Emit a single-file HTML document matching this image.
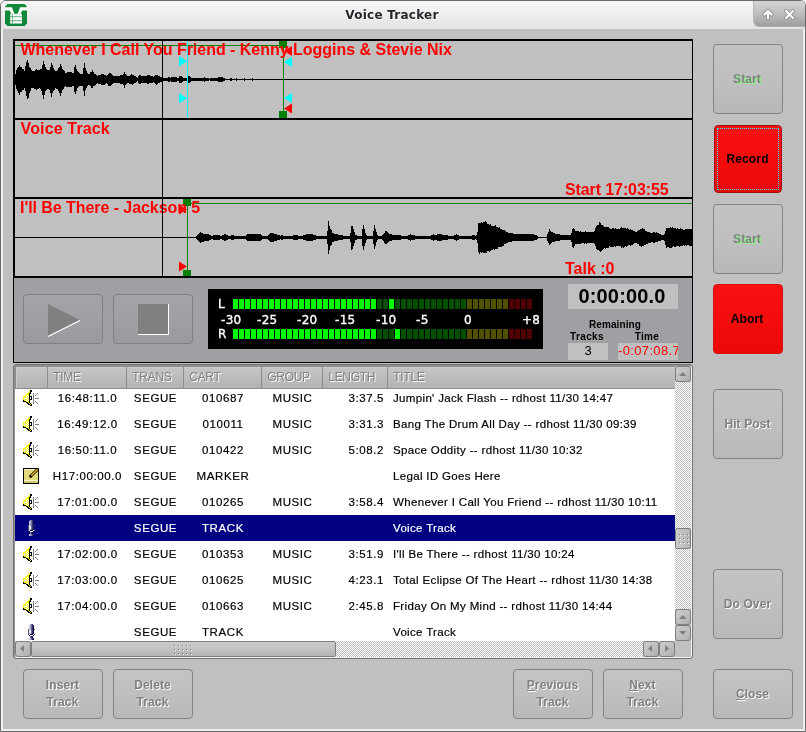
<!DOCTYPE html>
<html><head><meta charset="utf-8"><title>Voice Tracker</title>
<style>
html,body{margin:0;padding:0;}
body{width:806px;height:732px;overflow:hidden;background:#f4f4f4;position:relative;font-family:"Liberation Sans",sans-serif;font-size:12px;color:#000;}
.abs{position:absolute;}
#win{position:absolute;left:0;top:0;width:804px;height:730px;border:1px solid #6a6a6a;border-radius:6px 6px 0 0;background:#f0f0f0;overflow:hidden;}
#tb{position:absolute;left:0;top:0;width:804px;height:28px;background:linear-gradient(#f7f7f7,#efefef 40%,#e3e3e3);}
#tbtitle{position:absolute;left:-1px;top:7px;width:784px;text-align:center;font-family:"DejaVu Sans",sans-serif;font-weight:bold;font-size:12px;line-height:15px;color:#23282c;text-shadow:0 1px 0 #fff;letter-spacing:0.25px;}
#tbbtn{position:absolute;left:752px;top:0;width:52px;height:26px;border-radius:0 0 0 6px;background:linear-gradient(#d4d4d4,#c2c2c2 45%,#9e9e9e);border-left:1px solid #b8b8b8;border-bottom:1px solid #b0b0b0;box-sizing:border-box;}
#content{position:absolute;left:2px;top:28px;width:800px;height:700px;background:#c0c0c0;}
/* everything below is positioned in page coords via #page */
#page{position:absolute;left:0;top:0;width:806px;height:732px;}
#win,#page{will-change:transform;}
.wt{position:absolute;color:#ff0000;font-weight:bold;font-size:16px;line-height:18px;white-space:nowrap;}
.btn{position:absolute;box-sizing:border-box;border:1px solid #838383;border-radius:4px;letter-spacing:.1px;padding-right:1px;background:linear-gradient(#c3c3c3,#bfbfbf 50%,#b8b8b8);display:flex;align-items:center;justify-content:center;text-align:center;font-weight:bold;font-size:12px;line-height:17px;color:#808080;text-shadow:1px 1px 0 #fff;}
.btn.g{text-shadow:1px 1px 0 #80ff80;}
.btn.red{background:linear-gradient(#fb1010,#f40c0c 50%,#ea0808);border-color:#9c1212;color:#000;text-shadow:none;letter-spacing:.15px;}
.pbtn{position:absolute;box-sizing:border-box;border:1px solid #808084;border-radius:4px;background:linear-gradient(#a4a4a8,#a0a0a4 50%,#9a9a9e);}
.u{text-decoration:underline;}
.lbl{position:absolute;font-weight:bold;font-size:10px;line-height:12px;white-space:nowrap;text-align:center;}
.box{position:absolute;background:#c0c0c0;text-align:center;white-space:nowrap;overflow:hidden;}
/* list */
#list{position:absolute;left:13px;top:364px;width:680px;height:295px;box-sizing:border-box;border:1px solid #727272;border-radius:3px;background:#c0c0c0;overflow:hidden;box-shadow:inset 1px 1px 0 #929292,inset -1px -1px 0 #f2f2f2;}
#inner{position:absolute;left:1px;top:1px;width:676px;height:291px;overflow:hidden;}
#hdr{position:absolute;left:0;top:0;width:660px;height:23px;background:linear-gradient(#c6c6c6,#bdbdbd 50%,#b3b3b3);border-bottom:1px solid #8e8e8e;box-sizing:border-box;box-shadow:inset 1px 1px 0 #8c8c8c,inset 2px 2px 0 #cacaca;}
.h{position:absolute;top:0;height:22px;line-height:23px;color:#808080;text-shadow:1px 1px 0 #fff;font-size:12px;letter-spacing:-.3px;box-sizing:border-box;border-right:1px solid #8c8c8c;padding-left:5.300px;white-space:nowrap;}
#view{position:absolute;left:0;top:23px;width:660px;height:252px;background:#fff;overflow:hidden;}
.row{position:absolute;left:0;width:660px;height:26px;line-height:26px;white-space:nowrap;}
.row.sel{background:#000080;color:#fff;}
.c{position:absolute;top:0;height:26px;font-size:11.5px;letter-spacing:0.34px;-webkit-text-stroke:.18px currentColor;}
.c1{left:33px;width:79px;text-align:center;letter-spacing:.6px}
.c2{left:112px;width:57px;text-align:center;letter-spacing:.6px}
.c3{left:169px;width:78px;text-align:center;letter-spacing:.6px}
.c4{left:247px;width:61px;text-align:center;letter-spacing:.6px}
.c5{left:307px;width:62px;text-align:right;letter-spacing:.6px}
.c6{left:378px;}
.ic{position:absolute;left:8px;top:5px;}
.chk{background-color:#fff;background-image:conic-gradient(#c0c0c0 25%,#fff 0 50%,#c0c0c0 0 75%,#fff 0);background-size:2px 2px;}
.sb{position:absolute;box-sizing:border-box;border:1px solid #7e7e7e;border-radius:3px;background:linear-gradient(135deg,#cccccc,#c0c0c0 50%,#afafaf);}
</style></head>
<body>
<div id="win">
 <div id="tb"></div>
 <div id="tbtitle">Voice Tracker</div>
 <div id="tbbtn"></div>
 <div id="content"></div>
</div>
<div id="page">
<!-- window icon -->
<svg class="abs" style="left:5px;top:4px" width="22" height="22" viewBox="0 0 22 22">
 <path d="M2.5 0h17l2.5 2.5v17l-2.5 2.5h-17l-2.5-2.5v-17z" fill="#10893a"/>
 <path d="M0 3.200H6.900L8.200 6.600L8.800 8.400L10 9.800L11 10.100L12 9.800L13.200 8.400L13.800 6.600L15.100 3.200H22V6.600H17.200L15.800 10.100H17V19.400H5.200V10.100H6.200L4.800 6.600H0Z" fill="#fff"/>
 <rect x="7.100" y="10.100" width=".9" height="9.300" fill="#10893a" opacity=".6"/>
 <rect x="5.200" y="9.700" width="11.800" height=".8" fill="#10893a" opacity=".3"/>
 <rect x="5.200" y="12.300" width="11.800" height=".9" fill="#10893a" opacity=".72"/>
 <rect x="5.200" y="16.300" width="11.800" height=".9" fill="#10893a" opacity=".72"/>
</svg>
<!-- titlebar button glyphs -->
<svg class="abs" style="left:753px;top:0" width="52" height="27" viewBox="0 0 52 27">
 <g fill="none" stroke="#8a8a8a" stroke-width="4" stroke-linecap="round" stroke-linejoin="round" opacity=".8">
  <path d="M15 18v-7M11.5 14.5l3.500-3.500l3.500 3.500"/>
  <path d="M33 11l7 7M40 11l-7 7"/>
 </g>
 <g fill="none" stroke="#fff" stroke-width="2.200" stroke-linecap="round" stroke-linejoin="round">
  <path d="M15 18v-7M11.5 14.5l3.500-3.500l3.500 3.500"/>
  <path d="M33 11l7 7M40 11l-7 7"/>
 </g>
</svg>

<!-- wave / transport frame -->
<svg class="abs" style="left:0;top:0" width="806" height="370" viewBox="0 0 806 370" shape-rendering="crispEdges">
 <rect x="13" y="278" width="680" height="85" fill="#a0a0a4"/>
 <!-- frame -->
 <rect x="13" y="39" width="680" height="2" fill="#000"/>
 <rect x="13" y="118" width="680" height="2" fill="#000"/>
 <rect x="13" y="197" width="680" height="2" fill="#000"/>
 <rect x="13" y="276" width="680" height="2" fill="#000"/>
 <rect x="13" y="362" width="680" height="1" fill="#000"/>
 <rect x="13" y="39" width="2" height="239" fill="#000"/>
 <rect x="13" y="278" width="1" height="85" fill="#000"/>
 <rect x="692" y="39" width="1" height="324" fill="#000"/>
 <!-- centre lines -->
 <rect x="15" y="79" width="677" height="1" fill="#000"/>
 <rect x="15" y="237" width="677" height="1" fill="#000"/>
 <!-- now line -->
 <!-- waves -->
 <path d="M15 74v11h1v-11zM16 70v19h1v-19zM17 68v23h1v-23zM18 67v26h1v-26zM19 65v30h1v-30zM20 67v25h1v-25zM21 67v25h1v-25zM22 69v21h1v-21zM23 69v21h1v-21zM24 71v17h1v-17zM25 66v25h1v-25zM26 62v34h1v-34zM27 60v39h1v-39zM28 63v35h1v-35zM29 67v26h1v-26zM30 68v23h1v-23zM31 70v18h1v-18zM32 71v17h1v-17zM33 71v17h1v-17zM34 71v18h1v-18zM35 70v19h1v-19zM36 69v21h1v-21zM37 70v19h1v-19zM38 70v19h1v-19zM39 70v18h1v-18zM40 69v20h1v-20zM41 69v22h1v-22zM42 65v30h1v-30zM43 61v38h1v-38zM44 64v31h1v-31zM45 67v24h1v-24zM46 69v21h1v-21zM47 70v19h1v-19zM48 70v19h1v-19zM49 70v20h1v-20zM50 67v26h1v-26zM51 63v34h1v-34zM52 65v28h1v-28zM53 68v23h1v-23zM54 70v20h1v-20zM55 71v17h1v-17zM56 71v18h1v-18zM57 70v19h1v-19zM58 68v23h1v-23zM59 67v26h1v-26zM60 64v32h1v-32zM61 66v27h1v-27zM62 69v21h1v-21zM63 70v19h1v-19zM64 71v16h1v-16zM65 73v13h1v-13zM66 73v14h1v-14zM67 72v15h1v-15zM68 72v15h1v-15zM69 72v15h1v-15zM70 72v15h1v-15zM71 72v15h1v-15zM72 73v13h1v-13zM73 73v13h1v-13zM74 67v25h1v-25zM75 65v29h1v-29zM76 69v22h1v-22zM77 71v17h1v-17zM78 72v15h1v-15zM79 73v13h1v-13zM80 74v12h1v-12zM81 74v12h1v-12zM82 74v12h1v-12zM83 68v23h1v-23zM84 63v33h1v-33zM85 68v22h1v-22zM86 71v17h1v-17zM87 73v13h1v-13zM88 74v11h1v-11zM89 74v11h1v-11zM90 72v14h1v-14zM91 72v16h1v-16zM92 70v18h1v-18zM93 72v14h1v-14zM94 74v12h1v-12zM95 74v11h1v-11zM96 75v9h1v-9zM97 76v7h1v-7zM98 75v9h1v-9zM99 75v9h1v-9zM100 75v9h1v-9zM101 74v11h1v-11zM102 74v11h1v-11zM103 74v11h1v-11zM104 75v10h1v-10zM105 75v9h1v-9zM106 76v7h1v-7zM107 75v9h1v-9zM108 74v12h1v-12zM109 73v13h1v-13zM110 73v13h1v-13zM111 74v11h1v-11zM112 75v9h1v-9zM113 76v7h1v-7zM114 76v7h1v-7zM115 76v7h1v-7zM116 76v7h1v-7zM117 76v7h1v-7zM118 76v7h1v-7zM119 76v7h1v-7zM120 75v9h1v-9zM121 75v9h1v-9zM122 75v9h1v-9zM123 74v11h1v-11zM124 72v16h1v-16zM125 74v11h1v-11zM126 75v9h1v-9zM127 76v7h1v-7zM128 76v7h1v-7zM129 76v8h1v-8zM130 75v9h1v-9zM131 74v10h1v-10zM132 75v10h1v-10zM133 75v9h1v-9zM134 76v7h1v-7zM135 76v7h1v-7zM136 77v5h1v-5zM137 78v3h1v-3zM138 76v7h1v-7zM139 75v9h1v-9zM140 75v9h1v-9zM141 76v7h1v-7zM142 76v7h1v-7zM143 76v7h1v-7zM144 76v7h1v-7zM145 76v7h1v-7zM146 76v7h1v-7zM147 75v9h1v-9zM148 75v9h1v-9zM149 75v8h1v-8zM150 76v7h1v-7zM151 76v7h1v-7zM152 76v7h1v-7zM153 77v5h1v-5zM154 76v7h1v-7zM155 75v9h1v-9zM156 75v10h1v-10zM157 75v9h1v-9zM158 76v7h1v-7zM159 76v7h1v-7zM160 77v5h1v-5zM161 77v5h1v-5zM162 77v5h1v-5zM163 78v3h1v-3zM164 78v3h1v-3zM165 78v3h1v-3zM166 78v3h1v-3zM167 78v3h1v-3zM168 77v5h1v-5zM169 77v5h1v-5zM170 78v3h1v-3zM171 77v5h1v-5zM172 77v5h1v-5zM173 77v5h1v-5zM174 77v5h1v-5zM175 77v5h1v-5zM176 77v5h1v-5zM177 78v3h1v-3zM178 78v3h1v-3zM179 76v7h1v-7zM180 76v7h1v-7zM181 76v7h1v-7zM182 77v5h1v-5zM183 78v3h1v-3zM184 78v3h1v-3zM185 78v3h1v-3zM186 78v3h1v-3zM187 78v3h1v-3zM188 76v7h1v-7zM189 76v7h1v-7zM190 77v5h1v-5zM191 78v3h1v-3zM192 78v3h1v-3zM193 78v3h1v-3zM194 78v3h1v-3zM195 78v3h1v-3zM196 78v3h1v-3zM197 78v3h1v-3zM198 78v3h1v-3zM199 78v3h1v-3zM200 78v3h1v-3zM201 78v3h1v-3zM202 78v3h1v-3zM203 78v3h1v-3zM204 77v5h1v-5zM205 78v3h1v-3zM206 78v3h1v-3zM207 78v3h1v-3zM208 78v3h1v-3zM210 78v3h1v-3zM211 78v3h1v-3zM212 78v3h1v-3zM213 78v3h1v-3zM214 78v3h1v-3zM215 78v3h1v-3zM216 78v3h1v-3zM217 78v3h1v-3zM218 77v5h1v-5zM219 77v5h1v-5zM220 77v5h1v-5zM221 77v5h1v-5zM222 77v5h1v-5zM223 78v3h1v-3zM224 78v3h1v-3zM230 78v3h1v-3zM231 78v3h1v-3zM236 78v3h1v-3zM244 78v3h1v-3zM252 78v3h1v-3z" fill="#000"/>
 <path d="M196 236v3h1v-3zM197 235v5h1v-5zM198 234v7h1v-7zM199 233v9h1v-9zM200 232v11h1v-11zM201 233v9h1v-9zM202 233v9h1v-9zM203 234v8h1v-8zM204 234v7h1v-7zM205 234v7h1v-7zM206 234v7h1v-7zM207 234v7h1v-7zM208 234v7h1v-7zM209 235v5h1v-5zM210 235v5h1v-5zM211 236v3h1v-3zM212 236v3h1v-3zM213 235v5h1v-5zM214 235v5h1v-5zM215 235v5h1v-5zM216 235v5h1v-5zM217 235v5h1v-5zM218 235v5h1v-5zM219 235v5h1v-5zM220 236v3h1v-3zM221 236v3h1v-3zM222 235v5h1v-5zM223 235v5h1v-5zM224 234v7h1v-7zM225 234v7h1v-7zM226 235v5h1v-5zM227 235v5h1v-5zM228 236v3h1v-3zM229 236v3h1v-3zM230 236v3h1v-3zM231 235v5h1v-5zM232 235v5h1v-5zM233 235v5h1v-5zM234 236v3h1v-3zM235 236v3h1v-3zM236 236v3h1v-3zM237 236v3h1v-3zM238 236v3h1v-3zM239 236v3h1v-3zM240 236v3h1v-3zM241 236v3h1v-3zM242 236v3h1v-3zM243 236v3h1v-3zM244 236v3h1v-3zM245 236v3h1v-3zM246 235v5h1v-5zM247 234v7h1v-7zM248 234v7h1v-7zM249 234v7h1v-7zM250 234v7h1v-7zM251 234v7h1v-7zM252 234v7h1v-7zM253 234v7h1v-7zM254 234v7h1v-7zM255 234v7h1v-7zM256 234v7h1v-7zM257 234v7h1v-7zM258 234v7h1v-7zM259 234v7h1v-7zM260 234v7h1v-7zM261 235v5h1v-5zM262 236v3h1v-3zM263 236v3h1v-3zM264 236v3h1v-3zM265 236v3h1v-3zM266 236v3h1v-3zM267 236v3h1v-3zM268 235v5h1v-5zM269 234v7h1v-7zM270 233v9h1v-9zM271 233v9h1v-9zM272 233v9h1v-9zM273 233v9h1v-9zM274 234v7h1v-7zM275 234v7h1v-7zM276 234v7h1v-7zM277 235v5h1v-5zM278 235v5h1v-5zM279 235v5h1v-5zM280 236v3h1v-3zM281 235v5h1v-5zM282 235v5h1v-5zM283 236v3h1v-3zM284 236v3h1v-3zM285 236v3h1v-3zM286 236v3h1v-3zM287 236v3h1v-3zM288 236v3h1v-3zM289 236v3h1v-3zM290 236v3h1v-3zM291 236v3h1v-3zM292 236v3h1v-3zM293 235v5h1v-5zM294 235v5h1v-5zM295 235v5h1v-5zM296 235v5h1v-5zM297 235v5h1v-5zM298 236v3h1v-3zM299 236v3h1v-3zM300 236v3h1v-3zM301 236v3h1v-3zM302 236v3h1v-3zM303 235v5h1v-5zM304 235v5h1v-5zM305 235v5h1v-5zM306 234v7h1v-7zM307 234v7h1v-7zM308 234v7h1v-7zM309 234v7h1v-7zM310 234v7h1v-7zM311 234v7h1v-7zM312 234v7h1v-7zM313 235v5h1v-5zM314 235v5h1v-5zM315 235v5h1v-5zM316 236v3h1v-3zM317 236v3h1v-3zM318 236v3h1v-3zM319 236v3h1v-3zM320 236v3h1v-3zM321 236v3h1v-3zM322 236v3h1v-3zM323 236v3h1v-3zM324 236v3h1v-3zM325 236v3h1v-3zM326 236v3h1v-3zM327 231v13h1v-13zM328 221v33h1v-33zM329 226v24h1v-24zM330 229v17h1v-17zM331 230v15h1v-15zM332 233v9h1v-9zM333 233v9h1v-9zM334 234v7h1v-7zM335 234v7h1v-7zM336 234v7h1v-7zM337 234v7h1v-7zM338 235v5h1v-5zM339 235v5h1v-5zM340 235v5h1v-5zM341 235v5h1v-5zM342 235v5h1v-5zM343 236v3h1v-3zM344 236v3h1v-3zM345 236v3h1v-3zM346 236v3h1v-3zM347 236v3h1v-3zM348 236v3h1v-3zM349 236v3h1v-3zM350 233v9h1v-9zM351 226v24h1v-24zM352 226v23h1v-23zM353 229v17h1v-17zM354 232v11h1v-11zM355 235v5h1v-5zM356 235v5h1v-5zM357 236v3h1v-3zM358 236v3h1v-3zM359 236v3h1v-3zM360 236v3h1v-3zM361 236v3h1v-3zM362 229v17h1v-17zM363 225v25h1v-25zM364 229v17h1v-17zM365 233v10h1v-10zM366 235v5h1v-5zM367 236v3h1v-3zM368 236v3h1v-3zM369 236v3h1v-3zM370 236v3h1v-3zM371 236v3h1v-3zM372 236v3h1v-3zM373 231v13h1v-13zM374 225v24h1v-24zM375 229v17h1v-17zM376 232v10h1v-10zM377 235v5h1v-5zM378 236v3h1v-3zM379 236v3h1v-3zM380 236v3h1v-3zM381 236v3h1v-3zM382 235v5h1v-5zM383 234v7h1v-7zM384 233v10h1v-10zM385 231v13h1v-13zM386 231v13h1v-13zM387 232v11h1v-11zM388 233v9h1v-9zM389 234v7h1v-7zM390 234v7h1v-7zM391 234v7h1v-7zM392 235v5h1v-5zM393 235v5h1v-5zM394 235v5h1v-5zM395 235v5h1v-5zM396 235v5h1v-5zM397 235v5h1v-5zM398 235v5h1v-5zM399 235v5h1v-5zM400 235v5h1v-5zM401 236v3h1v-3zM402 236v3h1v-3zM403 236v3h1v-3zM404 236v3h1v-3zM405 236v3h1v-3zM406 236v3h1v-3zM407 236v3h1v-3zM408 235v5h1v-5zM409 235v5h1v-5zM410 234v7h1v-7zM411 235v5h1v-5zM412 235v5h1v-5zM413 235v5h1v-5zM414 235v5h1v-5zM415 236v3h1v-3zM416 236v3h1v-3zM417 236v3h1v-3zM418 236v3h1v-3zM419 236v3h1v-3zM420 236v3h1v-3zM421 236v3h1v-3zM422 236v3h1v-3zM423 236v3h1v-3zM424 236v3h1v-3zM425 236v3h1v-3zM426 236v3h1v-3zM427 236v3h1v-3zM428 236v3h1v-3zM429 236v3h1v-3zM430 236v3h1v-3zM431 235v5h1v-5zM432 235v5h1v-5zM433 234v7h1v-7zM434 235v5h1v-5zM435 235v5h1v-5zM436 235v5h1v-5zM437 234v7h1v-7zM438 234v7h1v-7zM439 234v7h1v-7zM440 234v7h1v-7zM441 234v7h1v-7zM442 235v5h1v-5zM443 235v5h1v-5zM444 235v5h1v-5zM445 235v5h1v-5zM446 235v5h1v-5zM447 235v5h1v-5zM448 236v3h1v-3zM449 236v3h1v-3zM450 236v3h1v-3zM451 236v3h1v-3zM452 236v3h1v-3zM453 236v3h1v-3zM454 235v5h1v-5zM455 235v5h1v-5zM456 234v7h1v-7zM457 235v5h1v-5zM458 235v5h1v-5zM459 236v3h1v-3zM460 236v3h1v-3zM461 236v3h1v-3zM462 236v3h1v-3zM463 236v3h1v-3zM464 236v3h1v-3zM465 236v3h1v-3zM466 236v3h1v-3zM467 236v3h1v-3zM468 236v3h1v-3zM469 236v3h1v-3zM470 236v3h1v-3zM471 236v3h1v-3zM472 235v5h1v-5zM473 235v5h1v-5zM474 235v5h1v-5zM475 236v3h1v-3zM476 235v5h1v-5zM477 232v11h1v-11zM478 223v29h1v-29zM479 223v31h1v-31zM480 223v29h1v-29zM481 222v31h1v-31zM482 223v29h1v-29zM483 222v31h1v-31zM484 222v31h1v-31zM485 221v32h1v-32zM486 222v31h1v-31zM487 224v27h1v-27zM488 224v27h1v-27zM489 225v27h1v-27zM490 224v27h1v-27zM491 226v24h1v-24zM492 226v24h1v-24zM493 226v23h1v-23zM494 226v24h1v-24zM495 225v24h1v-24zM496 227v22h1v-22zM497 227v22h1v-22zM498 228v19h1v-19zM499 227v20h1v-20zM500 229v18h1v-18zM501 229v18h1v-18zM502 230v16h1v-16zM503 230v16h1v-16zM504 230v14h1v-14zM505 231v13h1v-13zM506 232v11h1v-11zM507 232v11h1v-11zM508 233v9h1v-9zM509 233v9h1v-9zM510 233v9h1v-9zM511 233v9h1v-9zM512 233v8h1v-8zM513 234v7h1v-7zM514 234v7h1v-7zM515 234v7h1v-7zM516 234v7h1v-7zM517 234v7h1v-7zM518 234v7h1v-7zM519 234v7h1v-7zM520 234v7h1v-7zM521 234v7h1v-7zM522 234v7h1v-7zM523 234v7h1v-7zM524 234v7h1v-7zM525 234v7h1v-7zM526 234v7h1v-7zM527 234v7h1v-7zM528 234v7h1v-7zM529 234v7h1v-7zM530 234v7h1v-7zM531 234v7h1v-7zM532 234v7h1v-7zM533 234v7h1v-7zM534 235v5h1v-5zM535 235v5h1v-5zM536 235v5h1v-5zM537 236v3h1v-3zM547 234v7h1v-7zM548 232v11h1v-11zM549 229v16h1v-16zM550 231v13h1v-13zM551 232v11h1v-11zM552 232v10h1v-10zM553 233v9h1v-9zM554 233v9h1v-9zM555 234v7h1v-7zM556 234v7h1v-7zM557 234v7h1v-7zM558 234v7h1v-7zM559 234v7h1v-7zM560 235v5h1v-5zM561 235v5h1v-5zM562 235v5h1v-5zM563 235v5h1v-5zM564 235v5h1v-5zM565 235v5h1v-5zM566 235v5h1v-5zM567 235v5h1v-5zM568 235v5h1v-5zM569 235v5h1v-5zM570 235v5h1v-5zM571 233v9h1v-9zM572 229v18h1v-18zM573 228v20h1v-20zM574 229v17h1v-17zM575 231v13h1v-13zM576 231v13h1v-13zM577 231v13h1v-13zM578 231v13h1v-13zM579 232v12h1v-12zM580 231v13h1v-13zM581 232v11h1v-11zM582 232v11h1v-11zM583 232v11h1v-11zM584 232v12h1v-12zM585 231v12h1v-12zM586 232v12h1v-12zM587 232v11h1v-11zM588 232v11h1v-11zM589 232v11h1v-11zM590 232v11h1v-11zM591 232v11h1v-11zM592 232v11h1v-11zM593 232v11h1v-11zM594 231v13h1v-13zM595 228v18h1v-18zM596 226v23h1v-23zM597 225v25h1v-25zM598 225v25h1v-25zM599 222v29h1v-29zM600 223v29h1v-29zM601 225v26h1v-26zM602 225v25h1v-25zM603 226v23h1v-23zM604 227v21h1v-21zM605 227v22h1v-22zM606 227v21h1v-21zM607 227v21h1v-21zM608 227v21h1v-21zM609 228v18h1v-18zM610 229v18h1v-18zM611 229v18h1v-18zM612 228v19h1v-19zM613 228v19h1v-19zM614 229v17h1v-17zM615 228v19h1v-19zM616 229v17h1v-17zM617 229v17h1v-17zM618 229v17h1v-17zM619 229v17h1v-17zM620 228v18h1v-18zM621 227v21h1v-21zM622 228v19h1v-19zM623 228v20h1v-20zM624 228v19h1v-19zM625 228v18h1v-18zM626 229v18h1v-18zM627 228v18h1v-18zM628 229v16h1v-16zM629 230v15h1v-15zM630 229v17h1v-17zM631 230v15h1v-15zM632 230v15h1v-15zM633 231v13h1v-13zM634 231v12h1v-12zM635 232v11h1v-11zM636 232v11h1v-11zM637 231v13h1v-13zM638 230v14h1v-14zM639 230v16h1v-16zM640 229v17h1v-17zM641 229v18h1v-18zM642 228v18h1v-18zM643 229v17h1v-17zM644 229v16h1v-16zM645 231v14h1v-14zM646 231v13h1v-13zM647 232v12h1v-12zM648 232v11h1v-11zM649 232v11h1v-11zM650 233v10h1v-10zM651 233v9h1v-9zM652 233v9h1v-9zM653 232v11h1v-11zM654 232v11h1v-11zM655 233v9h1v-9zM656 232v10h1v-10zM657 233v9h1v-9zM658 233v8h1v-8zM659 234v7h1v-7zM660 234v7h1v-7zM661 235v5h1v-5zM662 235v5h1v-5zM663 235v5h1v-5zM664 234v7h1v-7zM665 231v14h1v-14zM666 228v20h1v-20zM667 228v19h1v-19zM668 228v19h1v-19zM669 228v20h1v-20zM670 227v21h1v-21zM671 228v20h1v-20zM672 227v20h1v-20zM673 228v18h1v-18zM674 228v19h1v-19zM675 228v19h1v-19zM676 229v17h1v-17zM677 228v18h1v-18zM678 229v17h1v-17zM679 229v18h1v-18zM680 228v18h1v-18zM681 229v17h1v-17zM682 229v17h1v-17zM683 230v15h1v-15zM684 230v16h1v-16zM685 229v16h1v-16zM686 229v17h1v-17zM687 229v16h1v-16zM688 229v16h1v-16zM689 229v17h1v-17zM690 229v17h1v-17zM691 229v17h1v-17z" fill="#000"/>
 <!-- wave1 markers -->
 <rect x="15" y="45" width="268" height="1" fill="#008000"/>
 <rect x="283" y="45" width="1" height="68" fill="#008000"/>
 <rect x="279" y="41" width="8" height="7" fill="#008000"/>
 <rect x="279" y="111" width="8" height="7" fill="#008000"/>
 <rect x="187" y="41" width="1" height="77" fill="#00ffff"/>
 <g shape-rendering="auto">
 <path d="M179 56v10.500l8-5.250z" fill="#00ffff"/>
 <path d="M179 93v10.500l8-5.250z" fill="#00ffff"/>
 <path d="M292 57v10l-8-5z" fill="#00ffff"/>
 <path d="M292 93v10l-8-5z" fill="#00ffff"/>
 <path d="M292 46v10l-8-5z" fill="#ff0000"/>
 <path d="M292 103.500v10l-8-5z" fill="#ff0000"/>
 <!-- wave3 markers -->
 <path d="M179 204.500v10l8-5z" fill="#ff0000"/>
 <path d="M179 261.500v10l8-5z" fill="#ff0000"/>
 </g>
 <rect x="187" y="203" width="505" height="1" fill="#008000"/>
 <rect x="187" y="203" width="1" height="68" fill="#008000"/>
 <rect x="183" y="199" width="8" height="7" fill="#008000"/>
 <rect x="183" y="270" width="8" height="6" fill="#008000"/>
 <!-- meter -->
 <rect x="208" y="289" width="335" height="60" fill="#000"/>
 <rect x="233" y="299" width="5" height="10" fill="#00ff00"/><rect x="239" y="299" width="5" height="10" fill="#00ff00"/><rect x="245" y="299" width="5" height="10" fill="#00ff00"/><rect x="251" y="299" width="5" height="10" fill="#00ff00"/><rect x="257" y="299" width="5" height="10" fill="#00ff00"/><rect x="263" y="299" width="5" height="10" fill="#00ff00"/><rect x="269" y="299" width="5" height="10" fill="#00ff00"/><rect x="275" y="299" width="5" height="10" fill="#00ff00"/><rect x="281" y="299" width="5" height="10" fill="#00ff00"/><rect x="287" y="299" width="5" height="10" fill="#00ff00"/><rect x="293" y="299" width="5" height="10" fill="#00ff00"/><rect x="299" y="299" width="5" height="10" fill="#00ff00"/><rect x="305" y="299" width="5" height="10" fill="#00ff00"/><rect x="311" y="299" width="5" height="10" fill="#00ff00"/><rect x="317" y="299" width="5" height="10" fill="#00ff00"/><rect x="323" y="299" width="5" height="10" fill="#00ff00"/><rect x="329" y="299" width="5" height="10" fill="#00ff00"/><rect x="335" y="299" width="5" height="10" fill="#00ff00"/><rect x="341" y="299" width="5" height="10" fill="#00ff00"/><rect x="347" y="299" width="5" height="10" fill="#00ff00"/><rect x="353" y="299" width="5" height="10" fill="#00ff00"/><rect x="359" y="299" width="5" height="10" fill="#00ff00"/><rect x="365" y="299" width="5" height="10" fill="#00ff00"/><rect x="371" y="299" width="5" height="10" fill="#00ff00"/><rect x="377" y="299" width="5" height="10" fill="#005000"/><rect x="383" y="299" width="5" height="10" fill="#005000"/><rect x="389" y="299" width="5" height="10" fill="#00ff00"/><rect x="395" y="299" width="5" height="10" fill="#005000"/><rect x="401" y="299" width="5" height="10" fill="#005000"/><rect x="407" y="299" width="5" height="10" fill="#005000"/><rect x="413" y="299" width="5" height="10" fill="#005000"/><rect x="419" y="299" width="5" height="10" fill="#005000"/><rect x="425" y="299" width="5" height="10" fill="#005000"/><rect x="431" y="299" width="5" height="10" fill="#005000"/><rect x="437" y="299" width="5" height="10" fill="#005000"/><rect x="443" y="299" width="5" height="10" fill="#005000"/><rect x="449" y="299" width="5" height="10" fill="#005000"/><rect x="455" y="299" width="5" height="10" fill="#005000"/><rect x="461" y="299" width="5" height="10" fill="#005000"/><rect x="467" y="299" width="5" height="10" fill="#505000"/><rect x="473" y="299" width="5" height="10" fill="#505000"/><rect x="479" y="299" width="5" height="10" fill="#505000"/><rect x="485" y="299" width="5" height="10" fill="#505000"/><rect x="491" y="299" width="5" height="10" fill="#505000"/><rect x="497" y="299" width="5" height="10" fill="#505000"/><rect x="503" y="299" width="5" height="10" fill="#505000"/><rect x="509" y="299" width="5" height="10" fill="#500000"/><rect x="515" y="299" width="5" height="10" fill="#500000"/><rect x="521" y="299" width="5" height="10" fill="#500000"/><rect x="527" y="299" width="5" height="10" fill="#500000"/><rect x="233" y="329" width="5" height="10" fill="#00ff00"/><rect x="239" y="329" width="5" height="10" fill="#00ff00"/><rect x="245" y="329" width="5" height="10" fill="#00ff00"/><rect x="251" y="329" width="5" height="10" fill="#00ff00"/><rect x="257" y="329" width="5" height="10" fill="#00ff00"/><rect x="263" y="329" width="5" height="10" fill="#00ff00"/><rect x="269" y="329" width="5" height="10" fill="#00ff00"/><rect x="275" y="329" width="5" height="10" fill="#00ff00"/><rect x="281" y="329" width="5" height="10" fill="#00ff00"/><rect x="287" y="329" width="5" height="10" fill="#00ff00"/><rect x="293" y="329" width="5" height="10" fill="#00ff00"/><rect x="299" y="329" width="5" height="10" fill="#00ff00"/><rect x="305" y="329" width="5" height="10" fill="#00ff00"/><rect x="311" y="329" width="5" height="10" fill="#00ff00"/><rect x="317" y="329" width="5" height="10" fill="#00ff00"/><rect x="323" y="329" width="5" height="10" fill="#00ff00"/><rect x="329" y="329" width="5" height="10" fill="#00ff00"/><rect x="335" y="329" width="5" height="10" fill="#00ff00"/><rect x="341" y="329" width="5" height="10" fill="#00ff00"/><rect x="347" y="329" width="5" height="10" fill="#00ff00"/><rect x="353" y="329" width="5" height="10" fill="#00ff00"/><rect x="359" y="329" width="5" height="10" fill="#00ff00"/><rect x="365" y="329" width="5" height="10" fill="#00ff00"/><rect x="371" y="329" width="5" height="10" fill="#00ff00"/><rect x="377" y="329" width="5" height="10" fill="#005000"/><rect x="383" y="329" width="5" height="10" fill="#005000"/><rect x="389" y="329" width="5" height="10" fill="#005000"/><rect x="395" y="329" width="5" height="10" fill="#00ff00"/><rect x="401" y="329" width="5" height="10" fill="#005000"/><rect x="407" y="329" width="5" height="10" fill="#005000"/><rect x="413" y="329" width="5" height="10" fill="#005000"/><rect x="419" y="329" width="5" height="10" fill="#005000"/><rect x="425" y="329" width="5" height="10" fill="#005000"/><rect x="431" y="329" width="5" height="10" fill="#005000"/><rect x="437" y="329" width="5" height="10" fill="#005000"/><rect x="443" y="329" width="5" height="10" fill="#005000"/><rect x="449" y="329" width="5" height="10" fill="#005000"/><rect x="455" y="329" width="5" height="10" fill="#005000"/><rect x="461" y="329" width="5" height="10" fill="#005000"/><rect x="467" y="329" width="5" height="10" fill="#505000"/><rect x="473" y="329" width="5" height="10" fill="#505000"/><rect x="479" y="329" width="5" height="10" fill="#505000"/><rect x="485" y="329" width="5" height="10" fill="#505000"/><rect x="491" y="329" width="5" height="10" fill="#505000"/><rect x="497" y="329" width="5" height="10" fill="#505000"/><rect x="503" y="329" width="5" height="10" fill="#505000"/><rect x="509" y="329" width="5" height="10" fill="#500000"/><rect x="515" y="329" width="5" height="10" fill="#500000"/><rect x="521" y="329" width="5" height="10" fill="#500000"/><rect x="527" y="329" width="5" height="10" fill="#500000"/>
</svg>
<div class="wt" style="left:20.500px;top:41px;letter-spacing:-.02px">Whenever I Call You Friend - Kenny Loggins &amp; Stevie Nix</div>
<div class="wt" style="left:20.500px;top:120px;letter-spacing:.15px">Voice Track</div>
<div class="wt" style="left:20px;top:199px;letter-spacing:-.06px">I'll Be There - Jackson 5</div>
<div class="wt" style="left:565px;top:181px;letter-spacing:-.1px">Start 17:03:55</div>
<div class="wt" style="left:565px;top:260px">Talk :0</div>

<div class="abs" style="left:162px;top:41px;width:1px;height:235px;background:#000"></div>
<!-- transport buttons -->
<div class="pbtn" style="left:23px;top:294px;width:80px;height:50px"></div>
<div class="pbtn" style="left:113px;top:294px;width:80px;height:50px"></div>
<svg class="abs" style="left:23px;top:294px" width="170" height="50" viewBox="23 294 170 50">
 <path d="M48 304v32l32-16z" fill="#808080"/>
 <path d="M48 336.500l32-16" stroke="#fff" stroke-width="1.300" fill="none"/>
 <rect x="138" y="304" width="30" height="30" fill="#808080" shape-rendering="crispEdges"/>
 <path d="M138 334.500h30.500v-30.500" stroke="#fff" stroke-width="1" fill="none" shape-rendering="crispEdges"/>
</svg>
<!-- meter labels -->
<div class="abs" style="left:0;top:0;font-family:'DejaVu Sans',sans-serif;font-size:12px;line-height:14px;color:#fff;white-space:nowrap;-webkit-text-stroke:.35px #fff;letter-spacing:.3px">
 <span class="abs" style="left:218px;top:297px">L</span>
 <span class="abs" style="left:218px;top:327px">R</span>
 <span class="abs" style="left:221px;top:313px">-30</span>
 <span class="abs" style="left:257px;top:313px">-25</span>
 <span class="abs" style="left:297px;top:313px">-20</span>
 <span class="abs" style="left:335px;top:313px">-15</span>
 <span class="abs" style="left:376px;top:313px">-10</span>
 <span class="abs" style="left:416px;top:313px">-5</span>
 <span class="abs" style="left:464px;top:313px">0</span>
 <span class="abs" style="left:522px;top:313px">+8</span>
</div>
<!-- timer -->
<div class="box" style="left:568px;top:284px;width:110px;height:25px;font-weight:bold;font-size:20px;line-height:25px;letter-spacing:.15px;text-indent:-2px">0:00:00.0</div>
<div class="lbl" style="left:585px;top:319px;width:60px;letter-spacing:.1px">Remaining</div>
<div class="lbl" style="left:566px;top:331px;width:42px;letter-spacing:.4px">Tracks</div>
<div class="lbl" style="left:626px;top:331px;width:42px;letter-spacing:.3px">Time</div>
<div class="box" style="left:568px;top:343px;width:40px;height:17px;font-size:13px;line-height:15px">3</div>
<div class="box" style="left:618px;top:343px;width:60px;height:17px;font-size:13px;line-height:15px;color:#ff0000;letter-spacing:.35px">-0:07:08.7</div>

<!-- right buttons -->
<div class="btn g" style="left:713px;top:44px;width:70px;height:70px;padding-right:2px">Start</div>
<div class="btn red" style="left:714px;top:125px;width:68px;height:68px">Record<div class="abs" style="left:2px;top:2px;width:60px;height:60px;border:1px dotted #30f0ff"></div></div>
<div class="btn g" style="left:713px;top:204px;width:70px;height:70px;padding-right:2px">Start</div>
<div class="btn red" style="left:713px;top:284px;width:70px;height:70px;border-color:#d81010;padding-right:2px">Abort</div>
<div class="btn" style="left:713px;top:389px;width:70px;height:70px">Hit Post</div>
<div class="btn" style="left:713px;top:569px;width:70px;height:70px">Do Over</div>
<div class="btn" style="left:713px;top:669px;width:80px;height:50px"><span><span class="u">C</span>lose</span></div>
<!-- bottom buttons -->
<div class="btn" style="left:23px;top:669px;width:80px;height:50px">Insert<br>Track</div>
<div class="btn" style="left:113px;top:669px;width:80px;height:50px">Delete<br>Track</div>
<div class="btn" style="left:513px;top:669px;width:80px;height:50px"><span><span class="u">P</span>revious<br>Track</span></div>
<div class="btn" style="left:603px;top:669px;width:80px;height:50px"><span><span class="u">N</span>ext<br>Track</span></div>

<!-- list -->
<div id="list"><div id="inner">
 <div id="hdr">
  <div class="h" style="left:0;width:33px"></div>
  <div class="h" style="left:33px;width:79px">TIME</div>
  <div class="h" style="left:112px;width:57px">TRANS</div>
  <div class="h" style="left:169px;width:78px">CART</div>
  <div class="h" style="left:247px;width:61px">GROUP</div>
  <div class="h" style="left:308px;width:65px">LENGTH</div>
  <div class="h" style="left:373px;width:287px;border-right:none">TITLE</div>
 </div>
 <div id="view">
<div class="row" style="top:-4px"><svg class="ic" width="16" height="16" viewBox="0 0 16 16" shape-rendering="crispEdges"><rect x="7" y="0" width="2" height="1" fill="#000"/><rect x="6" y="1" width="1" height="1" fill="#ffff00"/><rect x="7" y="1" width="2" height="1" fill="#000"/><rect x="5" y="2" width="2" height="1" fill="#ffff00"/><rect x="7" y="2" width="1" height="1" fill="#000"/><rect x="8" y="2" width="2" height="1" fill="#fff"/><rect x="4" y="3" width="2" height="1" fill="#ffff00"/><rect x="6" y="3" width="2" height="1" fill="#000"/><rect x="8" y="3" width="2" height="1" fill="#fff"/><rect x="10" y="3" width="1" height="1" fill="#808080"/><rect x="14" y="3" width="1" height="1" fill="#808080"/><rect x="3" y="4" width="3" height="1" fill="#ffff00"/><rect x="6" y="4" width="1" height="1" fill="#000"/><rect x="7" y="4" width="3" height="1" fill="#fff"/><rect x="10" y="4" width="1" height="1" fill="#808080"/><rect x="13" y="4" width="1" height="1" fill="#808080"/><rect x="2" y="5" width="2" height="1" fill="#ffff00"/><rect x="4" y="5" width="1" height="1" fill="#fff"/><rect x="5" y="5" width="1" height="1" fill="#ffff00"/><rect x="6" y="5" width="1" height="1" fill="#000"/><rect x="7" y="5" width="3" height="1" fill="#fff"/><rect x="10" y="5" width="1" height="1" fill="#808080"/><rect x="12" y="5" width="1" height="1" fill="#808080"/><rect x="0" y="6" width="3" height="1" fill="#ffff00"/><rect x="3" y="6" width="1" height="1" fill="#fff"/><rect x="4" y="6" width="1" height="1" fill="#ffff00"/><rect x="5" y="6" width="1" height="1" fill="#fff"/><rect x="6" y="6" width="3" height="1" fill="#000"/><rect x="9" y="6" width="1" height="1" fill="#fff"/><rect x="10" y="6" width="1" height="1" fill="#808080"/><rect x="0" y="7" width="1" height="1" fill="#ffff00"/><rect x="1" y="7" width="1" height="1" fill="#d8d8f0"/><rect x="2" y="7" width="2" height="1" fill="#ffff00"/><rect x="4" y="7" width="1" height="1" fill="#fff"/><rect x="5" y="7" width="1" height="1" fill="#ffff00"/><rect x="6" y="7" width="1" height="1" fill="#000"/><rect x="7" y="7" width="1" height="1" fill="#fff"/><rect x="8" y="7" width="1" height="1" fill="#000"/><rect x="9" y="7" width="1" height="1" fill="#fff"/><rect x="10" y="7" width="1" height="1" fill="#808080"/><rect x="0" y="8" width="1" height="1" fill="#ffff00"/><rect x="1" y="8" width="1" height="1" fill="#d8d8f0"/><rect x="2" y="8" width="2" height="1" fill="#fff"/><rect x="4" y="8" width="1" height="1" fill="#ffff00"/><rect x="5" y="8" width="1" height="1" fill="#fff"/><rect x="6" y="8" width="1" height="1" fill="#000"/><rect x="7" y="8" width="1" height="1" fill="#fff"/><rect x="8" y="8" width="1" height="1" fill="#000"/><rect x="9" y="8" width="1" height="1" fill="#fff"/><rect x="10" y="8" width="1" height="1" fill="#808080"/><rect x="12" y="8" width="4" height="1" fill="#808080"/><rect x="0" y="9" width="1" height="1" fill="#ffff00"/><rect x="1" y="9" width="1" height="1" fill="#d8d8f0"/><rect x="2" y="9" width="2" height="1" fill="#ffff00"/><rect x="4" y="9" width="1" height="1" fill="#fff"/><rect x="5" y="9" width="1" height="1" fill="#ffff00"/><rect x="6" y="9" width="3" height="1" fill="#000"/><rect x="9" y="9" width="1" height="1" fill="#fff"/><rect x="10" y="9" width="1" height="1" fill="#808080"/><rect x="0" y="10" width="1" height="1" fill="#000"/><rect x="1" y="10" width="2" height="1" fill="#ffff00"/><rect x="3" y="10" width="1" height="1" fill="#fff"/><rect x="4" y="10" width="1" height="1" fill="#ffff00"/><rect x="5" y="10" width="1" height="1" fill="#fff"/><rect x="6" y="10" width="1" height="1" fill="#000"/><rect x="7" y="10" width="3" height="1" fill="#fff"/><rect x="10" y="10" width="1" height="1" fill="#808080"/><rect x="0" y="11" width="3" height="1" fill="#000"/><rect x="3" y="11" width="1" height="1" fill="#ffff00"/><rect x="4" y="11" width="1" height="1" fill="#fff"/><rect x="5" y="11" width="1" height="1" fill="#ffff00"/><rect x="6" y="11" width="1" height="1" fill="#000"/><rect x="7" y="11" width="3" height="1" fill="#fff"/><rect x="10" y="11" width="1" height="1" fill="#808080"/><rect x="12" y="11" width="1" height="1" fill="#808080"/><rect x="3" y="12" width="2" height="1" fill="#000"/><rect x="5" y="12" width="1" height="1" fill="#ffff00"/><rect x="6" y="12" width="1" height="1" fill="#000"/><rect x="7" y="12" width="3" height="1" fill="#fff"/><rect x="10" y="12" width="1" height="1" fill="#808080"/><rect x="13" y="12" width="1" height="1" fill="#808080"/><rect x="4" y="13" width="2" height="1" fill="#000"/><rect x="6" y="13" width="1" height="1" fill="#ffff00"/><rect x="7" y="13" width="1" height="1" fill="#000"/><rect x="8" y="13" width="2" height="1" fill="#fff"/><rect x="10" y="13" width="1" height="1" fill="#808080"/><rect x="14" y="13" width="1" height="1" fill="#808080"/><rect x="5" y="14" width="2" height="1" fill="#000"/><rect x="7" y="14" width="1" height="1" fill="#ffff00"/><rect x="8" y="14" width="1" height="1" fill="#000"/><rect x="9" y="14" width="1" height="1" fill="#fff"/><rect x="7" y="15" width="2" height="1" fill="#000"/></svg><span class="c c1">16:48:11.0</span><span class="c c2">SEGUE</span><span class="c c3">010687</span><span class="c c4">MUSIC</span><span class="c c5">3:37.5</span><span class="c c6">Jumpin' Jack Flash -- rdhost 11/30 14:47</span></div>
<div class="row" style="top:22px"><svg class="ic" width="16" height="16" viewBox="0 0 16 16" shape-rendering="crispEdges"><rect x="7" y="0" width="2" height="1" fill="#000"/><rect x="6" y="1" width="1" height="1" fill="#ffff00"/><rect x="7" y="1" width="2" height="1" fill="#000"/><rect x="5" y="2" width="2" height="1" fill="#ffff00"/><rect x="7" y="2" width="1" height="1" fill="#000"/><rect x="8" y="2" width="2" height="1" fill="#fff"/><rect x="4" y="3" width="2" height="1" fill="#ffff00"/><rect x="6" y="3" width="2" height="1" fill="#000"/><rect x="8" y="3" width="2" height="1" fill="#fff"/><rect x="10" y="3" width="1" height="1" fill="#808080"/><rect x="14" y="3" width="1" height="1" fill="#808080"/><rect x="3" y="4" width="3" height="1" fill="#ffff00"/><rect x="6" y="4" width="1" height="1" fill="#000"/><rect x="7" y="4" width="3" height="1" fill="#fff"/><rect x="10" y="4" width="1" height="1" fill="#808080"/><rect x="13" y="4" width="1" height="1" fill="#808080"/><rect x="2" y="5" width="2" height="1" fill="#ffff00"/><rect x="4" y="5" width="1" height="1" fill="#fff"/><rect x="5" y="5" width="1" height="1" fill="#ffff00"/><rect x="6" y="5" width="1" height="1" fill="#000"/><rect x="7" y="5" width="3" height="1" fill="#fff"/><rect x="10" y="5" width="1" height="1" fill="#808080"/><rect x="12" y="5" width="1" height="1" fill="#808080"/><rect x="0" y="6" width="3" height="1" fill="#ffff00"/><rect x="3" y="6" width="1" height="1" fill="#fff"/><rect x="4" y="6" width="1" height="1" fill="#ffff00"/><rect x="5" y="6" width="1" height="1" fill="#fff"/><rect x="6" y="6" width="3" height="1" fill="#000"/><rect x="9" y="6" width="1" height="1" fill="#fff"/><rect x="10" y="6" width="1" height="1" fill="#808080"/><rect x="0" y="7" width="1" height="1" fill="#ffff00"/><rect x="1" y="7" width="1" height="1" fill="#d8d8f0"/><rect x="2" y="7" width="2" height="1" fill="#ffff00"/><rect x="4" y="7" width="1" height="1" fill="#fff"/><rect x="5" y="7" width="1" height="1" fill="#ffff00"/><rect x="6" y="7" width="1" height="1" fill="#000"/><rect x="7" y="7" width="1" height="1" fill="#fff"/><rect x="8" y="7" width="1" height="1" fill="#000"/><rect x="9" y="7" width="1" height="1" fill="#fff"/><rect x="10" y="7" width="1" height="1" fill="#808080"/><rect x="0" y="8" width="1" height="1" fill="#ffff00"/><rect x="1" y="8" width="1" height="1" fill="#d8d8f0"/><rect x="2" y="8" width="2" height="1" fill="#fff"/><rect x="4" y="8" width="1" height="1" fill="#ffff00"/><rect x="5" y="8" width="1" height="1" fill="#fff"/><rect x="6" y="8" width="1" height="1" fill="#000"/><rect x="7" y="8" width="1" height="1" fill="#fff"/><rect x="8" y="8" width="1" height="1" fill="#000"/><rect x="9" y="8" width="1" height="1" fill="#fff"/><rect x="10" y="8" width="1" height="1" fill="#808080"/><rect x="12" y="8" width="4" height="1" fill="#808080"/><rect x="0" y="9" width="1" height="1" fill="#ffff00"/><rect x="1" y="9" width="1" height="1" fill="#d8d8f0"/><rect x="2" y="9" width="2" height="1" fill="#ffff00"/><rect x="4" y="9" width="1" height="1" fill="#fff"/><rect x="5" y="9" width="1" height="1" fill="#ffff00"/><rect x="6" y="9" width="3" height="1" fill="#000"/><rect x="9" y="9" width="1" height="1" fill="#fff"/><rect x="10" y="9" width="1" height="1" fill="#808080"/><rect x="0" y="10" width="1" height="1" fill="#000"/><rect x="1" y="10" width="2" height="1" fill="#ffff00"/><rect x="3" y="10" width="1" height="1" fill="#fff"/><rect x="4" y="10" width="1" height="1" fill="#ffff00"/><rect x="5" y="10" width="1" height="1" fill="#fff"/><rect x="6" y="10" width="1" height="1" fill="#000"/><rect x="7" y="10" width="3" height="1" fill="#fff"/><rect x="10" y="10" width="1" height="1" fill="#808080"/><rect x="0" y="11" width="3" height="1" fill="#000"/><rect x="3" y="11" width="1" height="1" fill="#ffff00"/><rect x="4" y="11" width="1" height="1" fill="#fff"/><rect x="5" y="11" width="1" height="1" fill="#ffff00"/><rect x="6" y="11" width="1" height="1" fill="#000"/><rect x="7" y="11" width="3" height="1" fill="#fff"/><rect x="10" y="11" width="1" height="1" fill="#808080"/><rect x="12" y="11" width="1" height="1" fill="#808080"/><rect x="3" y="12" width="2" height="1" fill="#000"/><rect x="5" y="12" width="1" height="1" fill="#ffff00"/><rect x="6" y="12" width="1" height="1" fill="#000"/><rect x="7" y="12" width="3" height="1" fill="#fff"/><rect x="10" y="12" width="1" height="1" fill="#808080"/><rect x="13" y="12" width="1" height="1" fill="#808080"/><rect x="4" y="13" width="2" height="1" fill="#000"/><rect x="6" y="13" width="1" height="1" fill="#ffff00"/><rect x="7" y="13" width="1" height="1" fill="#000"/><rect x="8" y="13" width="2" height="1" fill="#fff"/><rect x="10" y="13" width="1" height="1" fill="#808080"/><rect x="14" y="13" width="1" height="1" fill="#808080"/><rect x="5" y="14" width="2" height="1" fill="#000"/><rect x="7" y="14" width="1" height="1" fill="#ffff00"/><rect x="8" y="14" width="1" height="1" fill="#000"/><rect x="9" y="14" width="1" height="1" fill="#fff"/><rect x="7" y="15" width="2" height="1" fill="#000"/></svg><span class="c c1">16:49:12.0</span><span class="c c2">SEGUE</span><span class="c c3">010011</span><span class="c c4">MUSIC</span><span class="c c5">3:31.3</span><span class="c c6">Bang The Drum All Day -- rdhost 11/30 09:39</span></div>
<div class="row" style="top:48px"><svg class="ic" width="16" height="16" viewBox="0 0 16 16" shape-rendering="crispEdges"><rect x="7" y="0" width="2" height="1" fill="#000"/><rect x="6" y="1" width="1" height="1" fill="#ffff00"/><rect x="7" y="1" width="2" height="1" fill="#000"/><rect x="5" y="2" width="2" height="1" fill="#ffff00"/><rect x="7" y="2" width="1" height="1" fill="#000"/><rect x="8" y="2" width="2" height="1" fill="#fff"/><rect x="4" y="3" width="2" height="1" fill="#ffff00"/><rect x="6" y="3" width="2" height="1" fill="#000"/><rect x="8" y="3" width="2" height="1" fill="#fff"/><rect x="10" y="3" width="1" height="1" fill="#808080"/><rect x="14" y="3" width="1" height="1" fill="#808080"/><rect x="3" y="4" width="3" height="1" fill="#ffff00"/><rect x="6" y="4" width="1" height="1" fill="#000"/><rect x="7" y="4" width="3" height="1" fill="#fff"/><rect x="10" y="4" width="1" height="1" fill="#808080"/><rect x="13" y="4" width="1" height="1" fill="#808080"/><rect x="2" y="5" width="2" height="1" fill="#ffff00"/><rect x="4" y="5" width="1" height="1" fill="#fff"/><rect x="5" y="5" width="1" height="1" fill="#ffff00"/><rect x="6" y="5" width="1" height="1" fill="#000"/><rect x="7" y="5" width="3" height="1" fill="#fff"/><rect x="10" y="5" width="1" height="1" fill="#808080"/><rect x="12" y="5" width="1" height="1" fill="#808080"/><rect x="0" y="6" width="3" height="1" fill="#ffff00"/><rect x="3" y="6" width="1" height="1" fill="#fff"/><rect x="4" y="6" width="1" height="1" fill="#ffff00"/><rect x="5" y="6" width="1" height="1" fill="#fff"/><rect x="6" y="6" width="3" height="1" fill="#000"/><rect x="9" y="6" width="1" height="1" fill="#fff"/><rect x="10" y="6" width="1" height="1" fill="#808080"/><rect x="0" y="7" width="1" height="1" fill="#ffff00"/><rect x="1" y="7" width="1" height="1" fill="#d8d8f0"/><rect x="2" y="7" width="2" height="1" fill="#ffff00"/><rect x="4" y="7" width="1" height="1" fill="#fff"/><rect x="5" y="7" width="1" height="1" fill="#ffff00"/><rect x="6" y="7" width="1" height="1" fill="#000"/><rect x="7" y="7" width="1" height="1" fill="#fff"/><rect x="8" y="7" width="1" height="1" fill="#000"/><rect x="9" y="7" width="1" height="1" fill="#fff"/><rect x="10" y="7" width="1" height="1" fill="#808080"/><rect x="0" y="8" width="1" height="1" fill="#ffff00"/><rect x="1" y="8" width="1" height="1" fill="#d8d8f0"/><rect x="2" y="8" width="2" height="1" fill="#fff"/><rect x="4" y="8" width="1" height="1" fill="#ffff00"/><rect x="5" y="8" width="1" height="1" fill="#fff"/><rect x="6" y="8" width="1" height="1" fill="#000"/><rect x="7" y="8" width="1" height="1" fill="#fff"/><rect x="8" y="8" width="1" height="1" fill="#000"/><rect x="9" y="8" width="1" height="1" fill="#fff"/><rect x="10" y="8" width="1" height="1" fill="#808080"/><rect x="12" y="8" width="4" height="1" fill="#808080"/><rect x="0" y="9" width="1" height="1" fill="#ffff00"/><rect x="1" y="9" width="1" height="1" fill="#d8d8f0"/><rect x="2" y="9" width="2" height="1" fill="#ffff00"/><rect x="4" y="9" width="1" height="1" fill="#fff"/><rect x="5" y="9" width="1" height="1" fill="#ffff00"/><rect x="6" y="9" width="3" height="1" fill="#000"/><rect x="9" y="9" width="1" height="1" fill="#fff"/><rect x="10" y="9" width="1" height="1" fill="#808080"/><rect x="0" y="10" width="1" height="1" fill="#000"/><rect x="1" y="10" width="2" height="1" fill="#ffff00"/><rect x="3" y="10" width="1" height="1" fill="#fff"/><rect x="4" y="10" width="1" height="1" fill="#ffff00"/><rect x="5" y="10" width="1" height="1" fill="#fff"/><rect x="6" y="10" width="1" height="1" fill="#000"/><rect x="7" y="10" width="3" height="1" fill="#fff"/><rect x="10" y="10" width="1" height="1" fill="#808080"/><rect x="0" y="11" width="3" height="1" fill="#000"/><rect x="3" y="11" width="1" height="1" fill="#ffff00"/><rect x="4" y="11" width="1" height="1" fill="#fff"/><rect x="5" y="11" width="1" height="1" fill="#ffff00"/><rect x="6" y="11" width="1" height="1" fill="#000"/><rect x="7" y="11" width="3" height="1" fill="#fff"/><rect x="10" y="11" width="1" height="1" fill="#808080"/><rect x="12" y="11" width="1" height="1" fill="#808080"/><rect x="3" y="12" width="2" height="1" fill="#000"/><rect x="5" y="12" width="1" height="1" fill="#ffff00"/><rect x="6" y="12" width="1" height="1" fill="#000"/><rect x="7" y="12" width="3" height="1" fill="#fff"/><rect x="10" y="12" width="1" height="1" fill="#808080"/><rect x="13" y="12" width="1" height="1" fill="#808080"/><rect x="4" y="13" width="2" height="1" fill="#000"/><rect x="6" y="13" width="1" height="1" fill="#ffff00"/><rect x="7" y="13" width="1" height="1" fill="#000"/><rect x="8" y="13" width="2" height="1" fill="#fff"/><rect x="10" y="13" width="1" height="1" fill="#808080"/><rect x="14" y="13" width="1" height="1" fill="#808080"/><rect x="5" y="14" width="2" height="1" fill="#000"/><rect x="7" y="14" width="1" height="1" fill="#ffff00"/><rect x="8" y="14" width="1" height="1" fill="#000"/><rect x="9" y="14" width="1" height="1" fill="#fff"/><rect x="7" y="15" width="2" height="1" fill="#000"/></svg><span class="c c1">16:50:11.0</span><span class="c c2">SEGUE</span><span class="c c3">010422</span><span class="c c4">MUSIC</span><span class="c c5">5:08.2</span><span class="c c6">Space Oddity -- rdhost 11/30 10:32</span></div>
<div class="row" style="top:74px"><svg class="ic" width="16" height="16" viewBox="0 0 16 16" shape-rendering="crispEdges"><g shape-rendering="auto"><rect x=".5" y=".5" width="15" height="15" fill="#e3db7e" stroke="#000" shape-rendering="crispEdges"/>
   <rect x="1" y="1" width="14" height="1" fill="#f6f2c0"/>
   <rect x="1" y="12" width="14" height="1" fill="#f8f5d0"/>
   <rect x="1" y="13" width="14" height="2" fill="#d2c966"/>
   <path d="M14.200 1.800l-6.500 6.500" stroke="#000" stroke-width="3" stroke-linecap="round"/>
   <path d="M14.200 1.800l-5.500 5.500" stroke="#f5c020" stroke-width="1.400" stroke-linecap="round"/></g></svg><span class="c c1">H17:00:00.0</span><span class="c c2">SEGUE</span><span class="c c3">MARKER</span><span class="c c4"></span><span class="c c5"></span><span class="c c6">Legal ID Goes Here</span></div>
<div class="row" style="top:100px"><svg class="ic" width="16" height="16" viewBox="0 0 16 16" shape-rendering="crispEdges"><rect x="7" y="0" width="2" height="1" fill="#000"/><rect x="6" y="1" width="1" height="1" fill="#ffff00"/><rect x="7" y="1" width="2" height="1" fill="#000"/><rect x="5" y="2" width="2" height="1" fill="#ffff00"/><rect x="7" y="2" width="1" height="1" fill="#000"/><rect x="8" y="2" width="2" height="1" fill="#fff"/><rect x="4" y="3" width="2" height="1" fill="#ffff00"/><rect x="6" y="3" width="2" height="1" fill="#000"/><rect x="8" y="3" width="2" height="1" fill="#fff"/><rect x="10" y="3" width="1" height="1" fill="#808080"/><rect x="14" y="3" width="1" height="1" fill="#808080"/><rect x="3" y="4" width="3" height="1" fill="#ffff00"/><rect x="6" y="4" width="1" height="1" fill="#000"/><rect x="7" y="4" width="3" height="1" fill="#fff"/><rect x="10" y="4" width="1" height="1" fill="#808080"/><rect x="13" y="4" width="1" height="1" fill="#808080"/><rect x="2" y="5" width="2" height="1" fill="#ffff00"/><rect x="4" y="5" width="1" height="1" fill="#fff"/><rect x="5" y="5" width="1" height="1" fill="#ffff00"/><rect x="6" y="5" width="1" height="1" fill="#000"/><rect x="7" y="5" width="3" height="1" fill="#fff"/><rect x="10" y="5" width="1" height="1" fill="#808080"/><rect x="12" y="5" width="1" height="1" fill="#808080"/><rect x="0" y="6" width="3" height="1" fill="#ffff00"/><rect x="3" y="6" width="1" height="1" fill="#fff"/><rect x="4" y="6" width="1" height="1" fill="#ffff00"/><rect x="5" y="6" width="1" height="1" fill="#fff"/><rect x="6" y="6" width="3" height="1" fill="#000"/><rect x="9" y="6" width="1" height="1" fill="#fff"/><rect x="10" y="6" width="1" height="1" fill="#808080"/><rect x="0" y="7" width="1" height="1" fill="#ffff00"/><rect x="1" y="7" width="1" height="1" fill="#d8d8f0"/><rect x="2" y="7" width="2" height="1" fill="#ffff00"/><rect x="4" y="7" width="1" height="1" fill="#fff"/><rect x="5" y="7" width="1" height="1" fill="#ffff00"/><rect x="6" y="7" width="1" height="1" fill="#000"/><rect x="7" y="7" width="1" height="1" fill="#fff"/><rect x="8" y="7" width="1" height="1" fill="#000"/><rect x="9" y="7" width="1" height="1" fill="#fff"/><rect x="10" y="7" width="1" height="1" fill="#808080"/><rect x="0" y="8" width="1" height="1" fill="#ffff00"/><rect x="1" y="8" width="1" height="1" fill="#d8d8f0"/><rect x="2" y="8" width="2" height="1" fill="#fff"/><rect x="4" y="8" width="1" height="1" fill="#ffff00"/><rect x="5" y="8" width="1" height="1" fill="#fff"/><rect x="6" y="8" width="1" height="1" fill="#000"/><rect x="7" y="8" width="1" height="1" fill="#fff"/><rect x="8" y="8" width="1" height="1" fill="#000"/><rect x="9" y="8" width="1" height="1" fill="#fff"/><rect x="10" y="8" width="1" height="1" fill="#808080"/><rect x="12" y="8" width="4" height="1" fill="#808080"/><rect x="0" y="9" width="1" height="1" fill="#ffff00"/><rect x="1" y="9" width="1" height="1" fill="#d8d8f0"/><rect x="2" y="9" width="2" height="1" fill="#ffff00"/><rect x="4" y="9" width="1" height="1" fill="#fff"/><rect x="5" y="9" width="1" height="1" fill="#ffff00"/><rect x="6" y="9" width="3" height="1" fill="#000"/><rect x="9" y="9" width="1" height="1" fill="#fff"/><rect x="10" y="9" width="1" height="1" fill="#808080"/><rect x="0" y="10" width="1" height="1" fill="#000"/><rect x="1" y="10" width="2" height="1" fill="#ffff00"/><rect x="3" y="10" width="1" height="1" fill="#fff"/><rect x="4" y="10" width="1" height="1" fill="#ffff00"/><rect x="5" y="10" width="1" height="1" fill="#fff"/><rect x="6" y="10" width="1" height="1" fill="#000"/><rect x="7" y="10" width="3" height="1" fill="#fff"/><rect x="10" y="10" width="1" height="1" fill="#808080"/><rect x="0" y="11" width="3" height="1" fill="#000"/><rect x="3" y="11" width="1" height="1" fill="#ffff00"/><rect x="4" y="11" width="1" height="1" fill="#fff"/><rect x="5" y="11" width="1" height="1" fill="#ffff00"/><rect x="6" y="11" width="1" height="1" fill="#000"/><rect x="7" y="11" width="3" height="1" fill="#fff"/><rect x="10" y="11" width="1" height="1" fill="#808080"/><rect x="12" y="11" width="1" height="1" fill="#808080"/><rect x="3" y="12" width="2" height="1" fill="#000"/><rect x="5" y="12" width="1" height="1" fill="#ffff00"/><rect x="6" y="12" width="1" height="1" fill="#000"/><rect x="7" y="12" width="3" height="1" fill="#fff"/><rect x="10" y="12" width="1" height="1" fill="#808080"/><rect x="13" y="12" width="1" height="1" fill="#808080"/><rect x="4" y="13" width="2" height="1" fill="#000"/><rect x="6" y="13" width="1" height="1" fill="#ffff00"/><rect x="7" y="13" width="1" height="1" fill="#000"/><rect x="8" y="13" width="2" height="1" fill="#fff"/><rect x="10" y="13" width="1" height="1" fill="#808080"/><rect x="14" y="13" width="1" height="1" fill="#808080"/><rect x="5" y="14" width="2" height="1" fill="#000"/><rect x="7" y="14" width="1" height="1" fill="#ffff00"/><rect x="8" y="14" width="1" height="1" fill="#000"/><rect x="9" y="14" width="1" height="1" fill="#fff"/><rect x="7" y="15" width="2" height="1" fill="#000"/></svg><span class="c c1">17:01:00.0</span><span class="c c2">SEGUE</span><span class="c c3">010265</span><span class="c c4">MUSIC</span><span class="c c5">3:58.4</span><span class="c c6">Whenever I Call You Friend -- rdhost 11/30 10:11</span></div>
<div class="row sel" style="top:126px"><svg class="ic" width="16" height="16" viewBox="0 0 16 16" shape-rendering="crispEdges"><rect x="7" y="0" width="1" height="1" fill="#a8a8cc"/><rect x="8" y="0" width="1" height="1" fill="#6c6c9c"/><rect x="9" y="0" width="1" height="1" fill="#34346c"/><rect x="6" y="1" width="1" height="1" fill="#c4c4dc"/><rect x="7" y="1" width="1" height="1" fill="#a8a8cc"/><rect x="8" y="1" width="1" height="1" fill="#6c6c9c"/><rect x="9" y="1" width="1" height="1" fill="#34346c"/><rect x="10" y="1" width="1" height="1" fill="#14144c"/><rect x="6" y="2" width="1" height="1" fill="#c4c4dc"/><rect x="7" y="2" width="1" height="1" fill="#a8a8cc"/><rect x="8" y="2" width="1" height="1" fill="#6c6c9c"/><rect x="9" y="2" width="1" height="1" fill="#34346c"/><rect x="10" y="2" width="1" height="1" fill="#14144c"/><rect x="6" y="3" width="1" height="1" fill="#c4c4dc"/><rect x="7" y="3" width="1" height="1" fill="#a8a8cc"/><rect x="8" y="3" width="1" height="1" fill="#6c6c9c"/><rect x="9" y="3" width="1" height="1" fill="#34346c"/><rect x="10" y="3" width="1" height="1" fill="#14144c"/><rect x="6" y="4" width="1" height="1" fill="#c4c4dc"/><rect x="7" y="4" width="1" height="1" fill="#a8a8cc"/><rect x="8" y="4" width="1" height="1" fill="#6c6c9c"/><rect x="9" y="4" width="1" height="1" fill="#34346c"/><rect x="10" y="4" width="1" height="1" fill="#14144c"/><rect x="5" y="5" width="1" height="1" fill="#50507c"/><rect x="6" y="5" width="1" height="1" fill="#c4c4dc"/><rect x="7" y="5" width="1" height="1" fill="#a8a8cc"/><rect x="8" y="5" width="1" height="1" fill="#6c6c9c"/><rect x="9" y="5" width="1" height="1" fill="#34346c"/><rect x="10" y="5" width="1" height="1" fill="#14144c"/><rect x="11" y="5" width="1" height="1" fill="#50507c"/><rect x="5" y="6" width="1" height="1" fill="#50507c"/><rect x="6" y="6" width="2" height="1" fill="#f0f0fc"/><rect x="8" y="6" width="1" height="1" fill="#6c6c9c"/><rect x="9" y="6" width="1" height="1" fill="#34346c"/><rect x="10" y="6" width="1" height="1" fill="#14144c"/><rect x="5" y="7" width="1" height="1" fill="#50507c"/><rect x="6" y="7" width="2" height="1" fill="#f0f0fc"/><rect x="8" y="7" width="1" height="1" fill="#6c6c9c"/><rect x="9" y="7" width="1" height="1" fill="#34346c"/><rect x="10" y="7" width="1" height="1" fill="#14144c"/><rect x="5" y="8" width="1" height="1" fill="#50507c"/><rect x="6" y="8" width="2" height="1" fill="#f0f0fc"/><rect x="8" y="8" width="1" height="1" fill="#6c6c9c"/><rect x="9" y="8" width="1" height="1" fill="#34346c"/><rect x="10" y="8" width="1" height="1" fill="#14144c"/><rect x="5" y="9" width="1" height="1" fill="#50507c"/><rect x="6" y="9" width="1" height="1" fill="#c4c4dc"/><rect x="7" y="9" width="1" height="1" fill="#a8a8cc"/><rect x="8" y="9" width="1" height="1" fill="#6c6c9c"/><rect x="9" y="9" width="1" height="1" fill="#34346c"/><rect x="10" y="9" width="1" height="1" fill="#14144c"/><rect x="5" y="10" width="1" height="1" fill="#50507c"/><rect x="6" y="10" width="1" height="1" fill="#f0f0fc"/><rect x="7" y="10" width="3" height="1" fill="#14144c"/><rect x="10" y="10" width="1" height="1" fill="#f0f0fc"/><rect x="11" y="10" width="1" height="1" fill="#50507c"/><rect x="6" y="11" width="1" height="1" fill="#14144c"/><rect x="7" y="11" width="3" height="1" fill="#f0f0fc"/><rect x="10" y="11" width="1" height="1" fill="#14144c"/><rect x="7" y="12" width="1" height="1" fill="#6c6c9c"/><rect x="8" y="12" width="1" height="1" fill="#34346c"/><rect x="9" y="12" width="1" height="1" fill="#14144c"/><rect x="7" y="13" width="1" height="1" fill="#6c6c9c"/><rect x="8" y="13" width="1" height="1" fill="#34346c"/><rect x="9" y="13" width="1" height="1" fill="#14144c"/><rect x="6" y="14" width="1" height="1" fill="#c4c4dc"/><rect x="7" y="14" width="1" height="1" fill="#a8a8cc"/><rect x="8" y="14" width="1" height="1" fill="#6c6c9c"/><rect x="9" y="14" width="1" height="1" fill="#34346c"/><rect x="10" y="14" width="1" height="1" fill="#14144c"/><rect x="6" y="15" width="1" height="1" fill="#c4c4dc"/><rect x="7" y="15" width="1" height="1" fill="#a8a8cc"/><rect x="8" y="15" width="1" height="1" fill="#6c6c9c"/><rect x="9" y="15" width="1" height="1" fill="#34346c"/><rect x="10" y="15" width="1" height="1" fill="#14144c"/></svg><span class="c c1"></span><span class="c c2">SEGUE</span><span class="c c3">TRACK</span><span class="c c4"></span><span class="c c5"></span><span class="c c6">Voice Track</span></div>
<div class="row" style="top:152px"><svg class="ic" width="16" height="16" viewBox="0 0 16 16" shape-rendering="crispEdges"><rect x="7" y="0" width="2" height="1" fill="#000"/><rect x="6" y="1" width="1" height="1" fill="#ffff00"/><rect x="7" y="1" width="2" height="1" fill="#000"/><rect x="5" y="2" width="2" height="1" fill="#ffff00"/><rect x="7" y="2" width="1" height="1" fill="#000"/><rect x="8" y="2" width="2" height="1" fill="#fff"/><rect x="4" y="3" width="2" height="1" fill="#ffff00"/><rect x="6" y="3" width="2" height="1" fill="#000"/><rect x="8" y="3" width="2" height="1" fill="#fff"/><rect x="10" y="3" width="1" height="1" fill="#808080"/><rect x="14" y="3" width="1" height="1" fill="#808080"/><rect x="3" y="4" width="3" height="1" fill="#ffff00"/><rect x="6" y="4" width="1" height="1" fill="#000"/><rect x="7" y="4" width="3" height="1" fill="#fff"/><rect x="10" y="4" width="1" height="1" fill="#808080"/><rect x="13" y="4" width="1" height="1" fill="#808080"/><rect x="2" y="5" width="2" height="1" fill="#ffff00"/><rect x="4" y="5" width="1" height="1" fill="#fff"/><rect x="5" y="5" width="1" height="1" fill="#ffff00"/><rect x="6" y="5" width="1" height="1" fill="#000"/><rect x="7" y="5" width="3" height="1" fill="#fff"/><rect x="10" y="5" width="1" height="1" fill="#808080"/><rect x="12" y="5" width="1" height="1" fill="#808080"/><rect x="0" y="6" width="3" height="1" fill="#ffff00"/><rect x="3" y="6" width="1" height="1" fill="#fff"/><rect x="4" y="6" width="1" height="1" fill="#ffff00"/><rect x="5" y="6" width="1" height="1" fill="#fff"/><rect x="6" y="6" width="3" height="1" fill="#000"/><rect x="9" y="6" width="1" height="1" fill="#fff"/><rect x="10" y="6" width="1" height="1" fill="#808080"/><rect x="0" y="7" width="1" height="1" fill="#ffff00"/><rect x="1" y="7" width="1" height="1" fill="#d8d8f0"/><rect x="2" y="7" width="2" height="1" fill="#ffff00"/><rect x="4" y="7" width="1" height="1" fill="#fff"/><rect x="5" y="7" width="1" height="1" fill="#ffff00"/><rect x="6" y="7" width="1" height="1" fill="#000"/><rect x="7" y="7" width="1" height="1" fill="#fff"/><rect x="8" y="7" width="1" height="1" fill="#000"/><rect x="9" y="7" width="1" height="1" fill="#fff"/><rect x="10" y="7" width="1" height="1" fill="#808080"/><rect x="0" y="8" width="1" height="1" fill="#ffff00"/><rect x="1" y="8" width="1" height="1" fill="#d8d8f0"/><rect x="2" y="8" width="2" height="1" fill="#fff"/><rect x="4" y="8" width="1" height="1" fill="#ffff00"/><rect x="5" y="8" width="1" height="1" fill="#fff"/><rect x="6" y="8" width="1" height="1" fill="#000"/><rect x="7" y="8" width="1" height="1" fill="#fff"/><rect x="8" y="8" width="1" height="1" fill="#000"/><rect x="9" y="8" width="1" height="1" fill="#fff"/><rect x="10" y="8" width="1" height="1" fill="#808080"/><rect x="12" y="8" width="4" height="1" fill="#808080"/><rect x="0" y="9" width="1" height="1" fill="#ffff00"/><rect x="1" y="9" width="1" height="1" fill="#d8d8f0"/><rect x="2" y="9" width="2" height="1" fill="#ffff00"/><rect x="4" y="9" width="1" height="1" fill="#fff"/><rect x="5" y="9" width="1" height="1" fill="#ffff00"/><rect x="6" y="9" width="3" height="1" fill="#000"/><rect x="9" y="9" width="1" height="1" fill="#fff"/><rect x="10" y="9" width="1" height="1" fill="#808080"/><rect x="0" y="10" width="1" height="1" fill="#000"/><rect x="1" y="10" width="2" height="1" fill="#ffff00"/><rect x="3" y="10" width="1" height="1" fill="#fff"/><rect x="4" y="10" width="1" height="1" fill="#ffff00"/><rect x="5" y="10" width="1" height="1" fill="#fff"/><rect x="6" y="10" width="1" height="1" fill="#000"/><rect x="7" y="10" width="3" height="1" fill="#fff"/><rect x="10" y="10" width="1" height="1" fill="#808080"/><rect x="0" y="11" width="3" height="1" fill="#000"/><rect x="3" y="11" width="1" height="1" fill="#ffff00"/><rect x="4" y="11" width="1" height="1" fill="#fff"/><rect x="5" y="11" width="1" height="1" fill="#ffff00"/><rect x="6" y="11" width="1" height="1" fill="#000"/><rect x="7" y="11" width="3" height="1" fill="#fff"/><rect x="10" y="11" width="1" height="1" fill="#808080"/><rect x="12" y="11" width="1" height="1" fill="#808080"/><rect x="3" y="12" width="2" height="1" fill="#000"/><rect x="5" y="12" width="1" height="1" fill="#ffff00"/><rect x="6" y="12" width="1" height="1" fill="#000"/><rect x="7" y="12" width="3" height="1" fill="#fff"/><rect x="10" y="12" width="1" height="1" fill="#808080"/><rect x="13" y="12" width="1" height="1" fill="#808080"/><rect x="4" y="13" width="2" height="1" fill="#000"/><rect x="6" y="13" width="1" height="1" fill="#ffff00"/><rect x="7" y="13" width="1" height="1" fill="#000"/><rect x="8" y="13" width="2" height="1" fill="#fff"/><rect x="10" y="13" width="1" height="1" fill="#808080"/><rect x="14" y="13" width="1" height="1" fill="#808080"/><rect x="5" y="14" width="2" height="1" fill="#000"/><rect x="7" y="14" width="1" height="1" fill="#ffff00"/><rect x="8" y="14" width="1" height="1" fill="#000"/><rect x="9" y="14" width="1" height="1" fill="#fff"/><rect x="7" y="15" width="2" height="1" fill="#000"/></svg><span class="c c1">17:02:00.0</span><span class="c c2">SEGUE</span><span class="c c3">010353</span><span class="c c4">MUSIC</span><span class="c c5">3:51.9</span><span class="c c6">I'll Be There -- rdhost 11/30 10:24</span></div>
<div class="row" style="top:178px"><svg class="ic" width="16" height="16" viewBox="0 0 16 16" shape-rendering="crispEdges"><rect x="7" y="0" width="2" height="1" fill="#000"/><rect x="6" y="1" width="1" height="1" fill="#ffff00"/><rect x="7" y="1" width="2" height="1" fill="#000"/><rect x="5" y="2" width="2" height="1" fill="#ffff00"/><rect x="7" y="2" width="1" height="1" fill="#000"/><rect x="8" y="2" width="2" height="1" fill="#fff"/><rect x="4" y="3" width="2" height="1" fill="#ffff00"/><rect x="6" y="3" width="2" height="1" fill="#000"/><rect x="8" y="3" width="2" height="1" fill="#fff"/><rect x="10" y="3" width="1" height="1" fill="#808080"/><rect x="14" y="3" width="1" height="1" fill="#808080"/><rect x="3" y="4" width="3" height="1" fill="#ffff00"/><rect x="6" y="4" width="1" height="1" fill="#000"/><rect x="7" y="4" width="3" height="1" fill="#fff"/><rect x="10" y="4" width="1" height="1" fill="#808080"/><rect x="13" y="4" width="1" height="1" fill="#808080"/><rect x="2" y="5" width="2" height="1" fill="#ffff00"/><rect x="4" y="5" width="1" height="1" fill="#fff"/><rect x="5" y="5" width="1" height="1" fill="#ffff00"/><rect x="6" y="5" width="1" height="1" fill="#000"/><rect x="7" y="5" width="3" height="1" fill="#fff"/><rect x="10" y="5" width="1" height="1" fill="#808080"/><rect x="12" y="5" width="1" height="1" fill="#808080"/><rect x="0" y="6" width="3" height="1" fill="#ffff00"/><rect x="3" y="6" width="1" height="1" fill="#fff"/><rect x="4" y="6" width="1" height="1" fill="#ffff00"/><rect x="5" y="6" width="1" height="1" fill="#fff"/><rect x="6" y="6" width="3" height="1" fill="#000"/><rect x="9" y="6" width="1" height="1" fill="#fff"/><rect x="10" y="6" width="1" height="1" fill="#808080"/><rect x="0" y="7" width="1" height="1" fill="#ffff00"/><rect x="1" y="7" width="1" height="1" fill="#d8d8f0"/><rect x="2" y="7" width="2" height="1" fill="#ffff00"/><rect x="4" y="7" width="1" height="1" fill="#fff"/><rect x="5" y="7" width="1" height="1" fill="#ffff00"/><rect x="6" y="7" width="1" height="1" fill="#000"/><rect x="7" y="7" width="1" height="1" fill="#fff"/><rect x="8" y="7" width="1" height="1" fill="#000"/><rect x="9" y="7" width="1" height="1" fill="#fff"/><rect x="10" y="7" width="1" height="1" fill="#808080"/><rect x="0" y="8" width="1" height="1" fill="#ffff00"/><rect x="1" y="8" width="1" height="1" fill="#d8d8f0"/><rect x="2" y="8" width="2" height="1" fill="#fff"/><rect x="4" y="8" width="1" height="1" fill="#ffff00"/><rect x="5" y="8" width="1" height="1" fill="#fff"/><rect x="6" y="8" width="1" height="1" fill="#000"/><rect x="7" y="8" width="1" height="1" fill="#fff"/><rect x="8" y="8" width="1" height="1" fill="#000"/><rect x="9" y="8" width="1" height="1" fill="#fff"/><rect x="10" y="8" width="1" height="1" fill="#808080"/><rect x="12" y="8" width="4" height="1" fill="#808080"/><rect x="0" y="9" width="1" height="1" fill="#ffff00"/><rect x="1" y="9" width="1" height="1" fill="#d8d8f0"/><rect x="2" y="9" width="2" height="1" fill="#ffff00"/><rect x="4" y="9" width="1" height="1" fill="#fff"/><rect x="5" y="9" width="1" height="1" fill="#ffff00"/><rect x="6" y="9" width="3" height="1" fill="#000"/><rect x="9" y="9" width="1" height="1" fill="#fff"/><rect x="10" y="9" width="1" height="1" fill="#808080"/><rect x="0" y="10" width="1" height="1" fill="#000"/><rect x="1" y="10" width="2" height="1" fill="#ffff00"/><rect x="3" y="10" width="1" height="1" fill="#fff"/><rect x="4" y="10" width="1" height="1" fill="#ffff00"/><rect x="5" y="10" width="1" height="1" fill="#fff"/><rect x="6" y="10" width="1" height="1" fill="#000"/><rect x="7" y="10" width="3" height="1" fill="#fff"/><rect x="10" y="10" width="1" height="1" fill="#808080"/><rect x="0" y="11" width="3" height="1" fill="#000"/><rect x="3" y="11" width="1" height="1" fill="#ffff00"/><rect x="4" y="11" width="1" height="1" fill="#fff"/><rect x="5" y="11" width="1" height="1" fill="#ffff00"/><rect x="6" y="11" width="1" height="1" fill="#000"/><rect x="7" y="11" width="3" height="1" fill="#fff"/><rect x="10" y="11" width="1" height="1" fill="#808080"/><rect x="12" y="11" width="1" height="1" fill="#808080"/><rect x="3" y="12" width="2" height="1" fill="#000"/><rect x="5" y="12" width="1" height="1" fill="#ffff00"/><rect x="6" y="12" width="1" height="1" fill="#000"/><rect x="7" y="12" width="3" height="1" fill="#fff"/><rect x="10" y="12" width="1" height="1" fill="#808080"/><rect x="13" y="12" width="1" height="1" fill="#808080"/><rect x="4" y="13" width="2" height="1" fill="#000"/><rect x="6" y="13" width="1" height="1" fill="#ffff00"/><rect x="7" y="13" width="1" height="1" fill="#000"/><rect x="8" y="13" width="2" height="1" fill="#fff"/><rect x="10" y="13" width="1" height="1" fill="#808080"/><rect x="14" y="13" width="1" height="1" fill="#808080"/><rect x="5" y="14" width="2" height="1" fill="#000"/><rect x="7" y="14" width="1" height="1" fill="#ffff00"/><rect x="8" y="14" width="1" height="1" fill="#000"/><rect x="9" y="14" width="1" height="1" fill="#fff"/><rect x="7" y="15" width="2" height="1" fill="#000"/></svg><span class="c c1">17:03:00.0</span><span class="c c2">SEGUE</span><span class="c c3">010625</span><span class="c c4">MUSIC</span><span class="c c5">4:23.1</span><span class="c c6">Total Eclipse Of The Heart -- rdhost 11/30 14:38</span></div>
<div class="row" style="top:204px"><svg class="ic" width="16" height="16" viewBox="0 0 16 16" shape-rendering="crispEdges"><rect x="7" y="0" width="2" height="1" fill="#000"/><rect x="6" y="1" width="1" height="1" fill="#ffff00"/><rect x="7" y="1" width="2" height="1" fill="#000"/><rect x="5" y="2" width="2" height="1" fill="#ffff00"/><rect x="7" y="2" width="1" height="1" fill="#000"/><rect x="8" y="2" width="2" height="1" fill="#fff"/><rect x="4" y="3" width="2" height="1" fill="#ffff00"/><rect x="6" y="3" width="2" height="1" fill="#000"/><rect x="8" y="3" width="2" height="1" fill="#fff"/><rect x="10" y="3" width="1" height="1" fill="#808080"/><rect x="14" y="3" width="1" height="1" fill="#808080"/><rect x="3" y="4" width="3" height="1" fill="#ffff00"/><rect x="6" y="4" width="1" height="1" fill="#000"/><rect x="7" y="4" width="3" height="1" fill="#fff"/><rect x="10" y="4" width="1" height="1" fill="#808080"/><rect x="13" y="4" width="1" height="1" fill="#808080"/><rect x="2" y="5" width="2" height="1" fill="#ffff00"/><rect x="4" y="5" width="1" height="1" fill="#fff"/><rect x="5" y="5" width="1" height="1" fill="#ffff00"/><rect x="6" y="5" width="1" height="1" fill="#000"/><rect x="7" y="5" width="3" height="1" fill="#fff"/><rect x="10" y="5" width="1" height="1" fill="#808080"/><rect x="12" y="5" width="1" height="1" fill="#808080"/><rect x="0" y="6" width="3" height="1" fill="#ffff00"/><rect x="3" y="6" width="1" height="1" fill="#fff"/><rect x="4" y="6" width="1" height="1" fill="#ffff00"/><rect x="5" y="6" width="1" height="1" fill="#fff"/><rect x="6" y="6" width="3" height="1" fill="#000"/><rect x="9" y="6" width="1" height="1" fill="#fff"/><rect x="10" y="6" width="1" height="1" fill="#808080"/><rect x="0" y="7" width="1" height="1" fill="#ffff00"/><rect x="1" y="7" width="1" height="1" fill="#d8d8f0"/><rect x="2" y="7" width="2" height="1" fill="#ffff00"/><rect x="4" y="7" width="1" height="1" fill="#fff"/><rect x="5" y="7" width="1" height="1" fill="#ffff00"/><rect x="6" y="7" width="1" height="1" fill="#000"/><rect x="7" y="7" width="1" height="1" fill="#fff"/><rect x="8" y="7" width="1" height="1" fill="#000"/><rect x="9" y="7" width="1" height="1" fill="#fff"/><rect x="10" y="7" width="1" height="1" fill="#808080"/><rect x="0" y="8" width="1" height="1" fill="#ffff00"/><rect x="1" y="8" width="1" height="1" fill="#d8d8f0"/><rect x="2" y="8" width="2" height="1" fill="#fff"/><rect x="4" y="8" width="1" height="1" fill="#ffff00"/><rect x="5" y="8" width="1" height="1" fill="#fff"/><rect x="6" y="8" width="1" height="1" fill="#000"/><rect x="7" y="8" width="1" height="1" fill="#fff"/><rect x="8" y="8" width="1" height="1" fill="#000"/><rect x="9" y="8" width="1" height="1" fill="#fff"/><rect x="10" y="8" width="1" height="1" fill="#808080"/><rect x="12" y="8" width="4" height="1" fill="#808080"/><rect x="0" y="9" width="1" height="1" fill="#ffff00"/><rect x="1" y="9" width="1" height="1" fill="#d8d8f0"/><rect x="2" y="9" width="2" height="1" fill="#ffff00"/><rect x="4" y="9" width="1" height="1" fill="#fff"/><rect x="5" y="9" width="1" height="1" fill="#ffff00"/><rect x="6" y="9" width="3" height="1" fill="#000"/><rect x="9" y="9" width="1" height="1" fill="#fff"/><rect x="10" y="9" width="1" height="1" fill="#808080"/><rect x="0" y="10" width="1" height="1" fill="#000"/><rect x="1" y="10" width="2" height="1" fill="#ffff00"/><rect x="3" y="10" width="1" height="1" fill="#fff"/><rect x="4" y="10" width="1" height="1" fill="#ffff00"/><rect x="5" y="10" width="1" height="1" fill="#fff"/><rect x="6" y="10" width="1" height="1" fill="#000"/><rect x="7" y="10" width="3" height="1" fill="#fff"/><rect x="10" y="10" width="1" height="1" fill="#808080"/><rect x="0" y="11" width="3" height="1" fill="#000"/><rect x="3" y="11" width="1" height="1" fill="#ffff00"/><rect x="4" y="11" width="1" height="1" fill="#fff"/><rect x="5" y="11" width="1" height="1" fill="#ffff00"/><rect x="6" y="11" width="1" height="1" fill="#000"/><rect x="7" y="11" width="3" height="1" fill="#fff"/><rect x="10" y="11" width="1" height="1" fill="#808080"/><rect x="12" y="11" width="1" height="1" fill="#808080"/><rect x="3" y="12" width="2" height="1" fill="#000"/><rect x="5" y="12" width="1" height="1" fill="#ffff00"/><rect x="6" y="12" width="1" height="1" fill="#000"/><rect x="7" y="12" width="3" height="1" fill="#fff"/><rect x="10" y="12" width="1" height="1" fill="#808080"/><rect x="13" y="12" width="1" height="1" fill="#808080"/><rect x="4" y="13" width="2" height="1" fill="#000"/><rect x="6" y="13" width="1" height="1" fill="#ffff00"/><rect x="7" y="13" width="1" height="1" fill="#000"/><rect x="8" y="13" width="2" height="1" fill="#fff"/><rect x="10" y="13" width="1" height="1" fill="#808080"/><rect x="14" y="13" width="1" height="1" fill="#808080"/><rect x="5" y="14" width="2" height="1" fill="#000"/><rect x="7" y="14" width="1" height="1" fill="#ffff00"/><rect x="8" y="14" width="1" height="1" fill="#000"/><rect x="9" y="14" width="1" height="1" fill="#fff"/><rect x="7" y="15" width="2" height="1" fill="#000"/></svg><span class="c c1">17:04:00.0</span><span class="c c2">SEGUE</span><span class="c c3">010663</span><span class="c c4">MUSIC</span><span class="c c5">2:45.8</span><span class="c c6">Friday On My Mind -- rdhost 11/30 14:44</span></div>
<div class="row" style="top:230px"><svg class="ic" width="16" height="16" viewBox="0 0 16 16" shape-rendering="crispEdges"><rect x="7" y="0" width="1" height="1" fill="#a8a8cc"/><rect x="8" y="0" width="1" height="1" fill="#6c6c9c"/><rect x="9" y="0" width="1" height="1" fill="#34346c"/><rect x="6" y="1" width="1" height="1" fill="#c4c4dc"/><rect x="7" y="1" width="1" height="1" fill="#a8a8cc"/><rect x="8" y="1" width="1" height="1" fill="#6c6c9c"/><rect x="9" y="1" width="1" height="1" fill="#34346c"/><rect x="10" y="1" width="1" height="1" fill="#14144c"/><rect x="6" y="2" width="1" height="1" fill="#c4c4dc"/><rect x="7" y="2" width="1" height="1" fill="#a8a8cc"/><rect x="8" y="2" width="1" height="1" fill="#6c6c9c"/><rect x="9" y="2" width="1" height="1" fill="#34346c"/><rect x="10" y="2" width="1" height="1" fill="#14144c"/><rect x="6" y="3" width="1" height="1" fill="#c4c4dc"/><rect x="7" y="3" width="1" height="1" fill="#a8a8cc"/><rect x="8" y="3" width="1" height="1" fill="#6c6c9c"/><rect x="9" y="3" width="1" height="1" fill="#34346c"/><rect x="10" y="3" width="1" height="1" fill="#14144c"/><rect x="6" y="4" width="1" height="1" fill="#c4c4dc"/><rect x="7" y="4" width="1" height="1" fill="#a8a8cc"/><rect x="8" y="4" width="1" height="1" fill="#6c6c9c"/><rect x="9" y="4" width="1" height="1" fill="#34346c"/><rect x="10" y="4" width="1" height="1" fill="#14144c"/><rect x="5" y="5" width="1" height="1" fill="#50507c"/><rect x="6" y="5" width="1" height="1" fill="#c4c4dc"/><rect x="7" y="5" width="1" height="1" fill="#a8a8cc"/><rect x="8" y="5" width="1" height="1" fill="#6c6c9c"/><rect x="9" y="5" width="1" height="1" fill="#34346c"/><rect x="10" y="5" width="1" height="1" fill="#14144c"/><rect x="11" y="5" width="1" height="1" fill="#50507c"/><rect x="5" y="6" width="1" height="1" fill="#50507c"/><rect x="6" y="6" width="2" height="1" fill="#f0f0fc"/><rect x="8" y="6" width="1" height="1" fill="#6c6c9c"/><rect x="9" y="6" width="1" height="1" fill="#34346c"/><rect x="10" y="6" width="1" height="1" fill="#14144c"/><rect x="5" y="7" width="1" height="1" fill="#50507c"/><rect x="6" y="7" width="2" height="1" fill="#f0f0fc"/><rect x="8" y="7" width="1" height="1" fill="#6c6c9c"/><rect x="9" y="7" width="1" height="1" fill="#34346c"/><rect x="10" y="7" width="1" height="1" fill="#14144c"/><rect x="5" y="8" width="1" height="1" fill="#50507c"/><rect x="6" y="8" width="2" height="1" fill="#f0f0fc"/><rect x="8" y="8" width="1" height="1" fill="#6c6c9c"/><rect x="9" y="8" width="1" height="1" fill="#34346c"/><rect x="10" y="8" width="1" height="1" fill="#14144c"/><rect x="5" y="9" width="1" height="1" fill="#50507c"/><rect x="6" y="9" width="1" height="1" fill="#c4c4dc"/><rect x="7" y="9" width="1" height="1" fill="#a8a8cc"/><rect x="8" y="9" width="1" height="1" fill="#6c6c9c"/><rect x="9" y="9" width="1" height="1" fill="#34346c"/><rect x="10" y="9" width="1" height="1" fill="#14144c"/><rect x="5" y="10" width="1" height="1" fill="#50507c"/><rect x="6" y="10" width="1" height="1" fill="#f0f0fc"/><rect x="7" y="10" width="3" height="1" fill="#14144c"/><rect x="10" y="10" width="1" height="1" fill="#f0f0fc"/><rect x="11" y="10" width="1" height="1" fill="#50507c"/><rect x="6" y="11" width="1" height="1" fill="#14144c"/><rect x="7" y="11" width="3" height="1" fill="#f0f0fc"/><rect x="10" y="11" width="1" height="1" fill="#14144c"/><rect x="7" y="12" width="1" height="1" fill="#6c6c9c"/><rect x="8" y="12" width="1" height="1" fill="#34346c"/><rect x="9" y="12" width="1" height="1" fill="#14144c"/><rect x="7" y="13" width="1" height="1" fill="#6c6c9c"/><rect x="8" y="13" width="1" height="1" fill="#34346c"/><rect x="9" y="13" width="1" height="1" fill="#14144c"/><rect x="6" y="14" width="1" height="1" fill="#c4c4dc"/><rect x="7" y="14" width="1" height="1" fill="#a8a8cc"/><rect x="8" y="14" width="1" height="1" fill="#6c6c9c"/><rect x="9" y="14" width="1" height="1" fill="#34346c"/><rect x="10" y="14" width="1" height="1" fill="#14144c"/><rect x="6" y="15" width="1" height="1" fill="#c4c4dc"/><rect x="7" y="15" width="1" height="1" fill="#a8a8cc"/><rect x="8" y="15" width="1" height="1" fill="#6c6c9c"/><rect x="9" y="15" width="1" height="1" fill="#34346c"/><rect x="10" y="15" width="1" height="1" fill="#14144c"/></svg><span class="c c1"></span><span class="c c2">SEGUE</span><span class="c c3">TRACK</span><span class="c c4"></span><span class="c c5"></span><span class="c c6">Voice Track</span></div>
 </div>
 <!-- vertical scrollbar -->
 <div class="abs chk" style="left:660px;top:0;width:16px;height:275px"></div>
 <div class="abs chk" style="left:0;top:275px;width:660px;height:16px"></div>
 <div class="abs" style="left:660px;top:0;width:16px;height:16px;background:#bcbcbc"></div>
 <div class="abs" style="left:660px;top:243px;width:16px;height:32px;background:#c0c0c0"></div>
 <div class="abs" style="left:660px;top:275px;width:16px;height:16px;background:#c0c0c0"></div>
 <div class="abs" style="left:0;top:275px;width:16px;height:16px;background:#c0c0c0"></div>
 <div class="abs" style="left:628px;top:275px;width:32px;height:16px;background:#c0c0c0"></div>
 <div class="sb" style="left:660px;top:0;width:16px;height:16px"></div>
 <div class="sb" style="left:660px;top:162px;width:16px;height:21px;border-radius:2px;background:linear-gradient(90deg,#cbcbcb,#c2c2c2 50%,#b4b4b4)"></div>
 <div class="sb" style="left:660px;top:243px;width:16px;height:16px"></div>
 <div class="sb" style="left:660px;top:259px;width:16px;height:16px"></div>
 <!-- horizontal scrollbar -->
 <div class="sb" style="left:0;top:275px;width:16px;height:16px"></div>
 <div class="sb" style="left:16px;top:275px;width:305px;height:16px;border-radius:2px;background:linear-gradient(#cbcbcb,#c2c2c2 50%,#b4b4b4)"></div>
 <div class="sb" style="left:628px;top:275px;width:16px;height:16px"></div>
 <div class="sb" style="left:644px;top:275px;width:16px;height:16px"></div>
 <svg class="abs" style="left:0;top:0" width="677" height="291" viewBox="0 0 677 291">
  <g fill="#808080">
   <path d="M664 10h7.500l-3.750-4z"/>
   <path d="M664 253h7.500l-3.750-4z"/>
   <path d="M664 265h7.500l-3.750 4z"/>
   <path d="M9 279v7l-4-3.500z"/>
   <path d="M637 279v7l-4-3.500z"/>
   <path d="M650 279v7l4-3.500z"/>
  </g>
  <g shape-rendering="crispEdges"><rect x="664" y="168" width="1" height="1" fill="#7e7e7e"/><rect x="665" y="169" width="1" height="1" fill="#f4f4f4"/><rect x="668" y="168" width="1" height="1" fill="#7e7e7e"/><rect x="669" y="169" width="1" height="1" fill="#f4f4f4"/><rect x="672" y="168" width="1" height="1" fill="#7e7e7e"/><rect x="673" y="169" width="1" height="1" fill="#f4f4f4"/><rect x="664" y="172" width="1" height="1" fill="#7e7e7e"/><rect x="665" y="173" width="1" height="1" fill="#f4f4f4"/><rect x="668" y="172" width="1" height="1" fill="#7e7e7e"/><rect x="669" y="173" width="1" height="1" fill="#f4f4f4"/><rect x="672" y="172" width="1" height="1" fill="#7e7e7e"/><rect x="673" y="173" width="1" height="1" fill="#f4f4f4"/><rect x="664" y="176" width="1" height="1" fill="#7e7e7e"/><rect x="665" y="177" width="1" height="1" fill="#f4f4f4"/><rect x="668" y="176" width="1" height="1" fill="#7e7e7e"/><rect x="669" y="177" width="1" height="1" fill="#f4f4f4"/><rect x="672" y="176" width="1" height="1" fill="#7e7e7e"/><rect x="673" y="177" width="1" height="1" fill="#f4f4f4"/><rect x="159" y="279" width="1" height="1" fill="#7e7e7e"/><rect x="160" y="280" width="1" height="1" fill="#f4f4f4"/><rect x="163" y="279" width="1" height="1" fill="#7e7e7e"/><rect x="164" y="280" width="1" height="1" fill="#f4f4f4"/><rect x="167" y="279" width="1" height="1" fill="#7e7e7e"/><rect x="168" y="280" width="1" height="1" fill="#f4f4f4"/><rect x="171" y="279" width="1" height="1" fill="#7e7e7e"/><rect x="172" y="280" width="1" height="1" fill="#f4f4f4"/><rect x="175" y="279" width="1" height="1" fill="#7e7e7e"/><rect x="176" y="280" width="1" height="1" fill="#f4f4f4"/><rect x="159" y="283" width="1" height="1" fill="#7e7e7e"/><rect x="160" y="284" width="1" height="1" fill="#f4f4f4"/><rect x="163" y="283" width="1" height="1" fill="#7e7e7e"/><rect x="164" y="284" width="1" height="1" fill="#f4f4f4"/><rect x="167" y="283" width="1" height="1" fill="#7e7e7e"/><rect x="168" y="284" width="1" height="1" fill="#f4f4f4"/><rect x="171" y="283" width="1" height="1" fill="#7e7e7e"/><rect x="172" y="284" width="1" height="1" fill="#f4f4f4"/><rect x="175" y="283" width="1" height="1" fill="#7e7e7e"/><rect x="176" y="284" width="1" height="1" fill="#f4f4f4"/><rect x="159" y="287" width="1" height="1" fill="#7e7e7e"/><rect x="160" y="288" width="1" height="1" fill="#f4f4f4"/><rect x="163" y="287" width="1" height="1" fill="#7e7e7e"/><rect x="164" y="288" width="1" height="1" fill="#f4f4f4"/><rect x="167" y="287" width="1" height="1" fill="#7e7e7e"/><rect x="168" y="288" width="1" height="1" fill="#f4f4f4"/><rect x="171" y="287" width="1" height="1" fill="#7e7e7e"/><rect x="172" y="288" width="1" height="1" fill="#f4f4f4"/><rect x="175" y="287" width="1" height="1" fill="#7e7e7e"/><rect x="176" y="288" width="1" height="1" fill="#f4f4f4"/></g>
 </svg>
</div></div>
</div>
</body></html>
